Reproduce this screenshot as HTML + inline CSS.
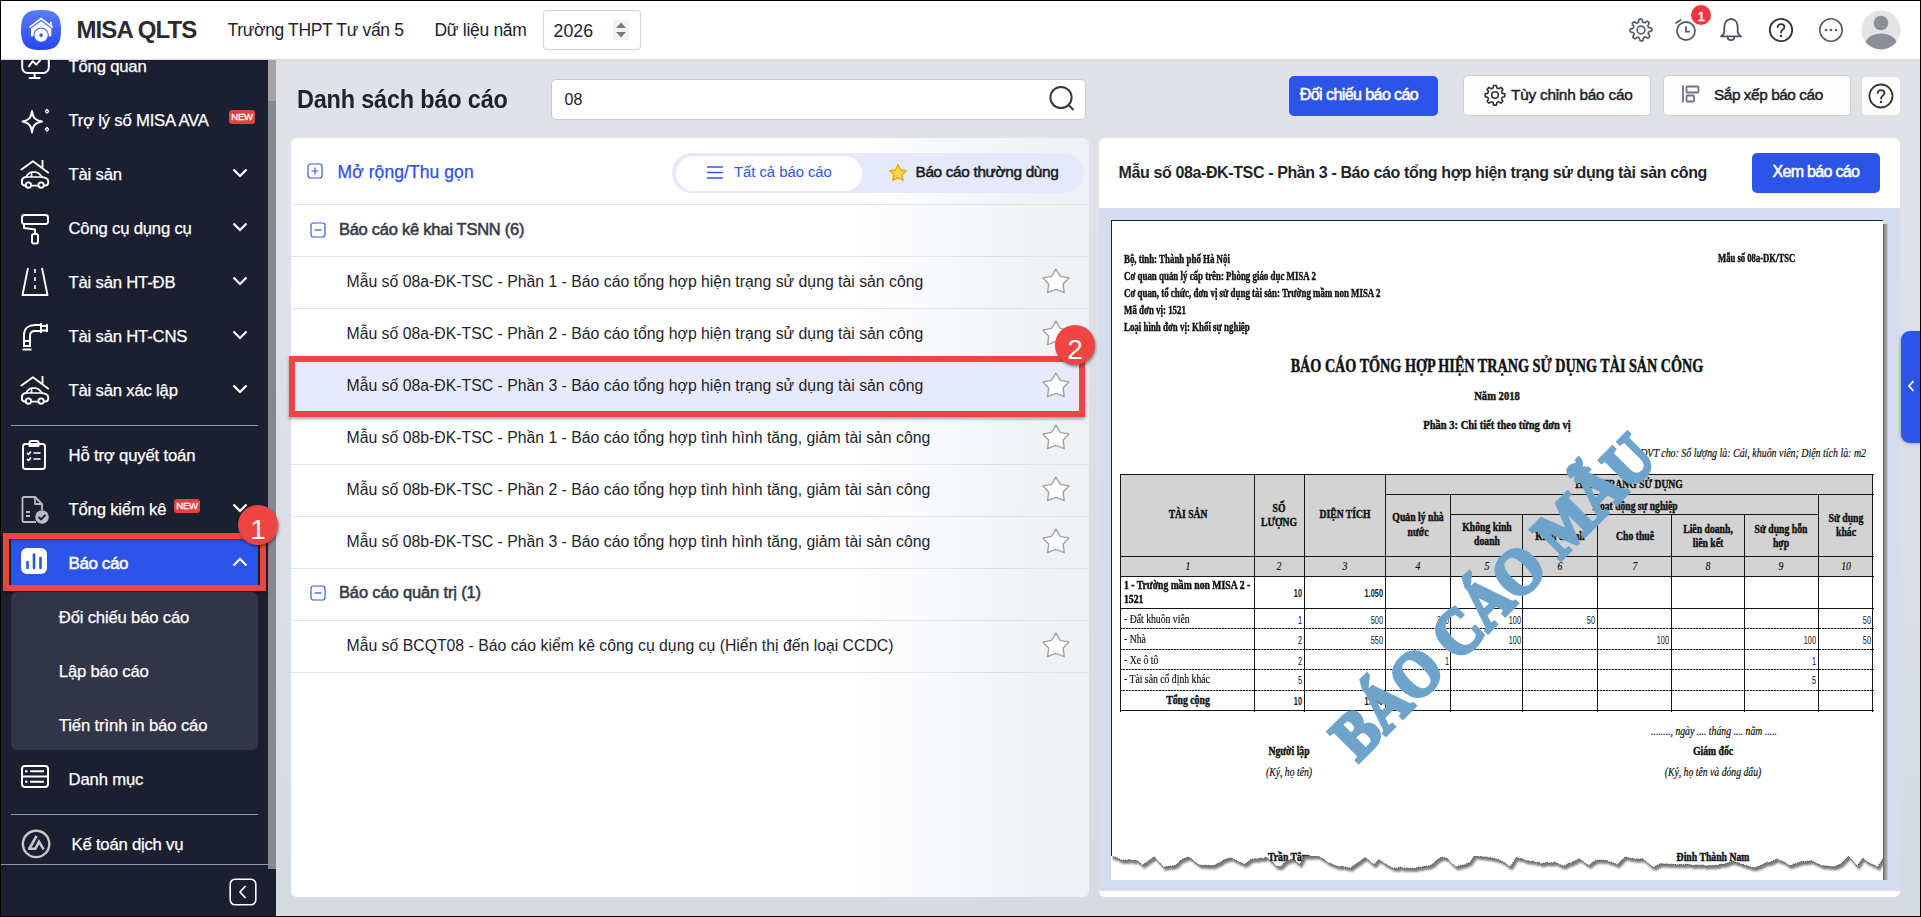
<!DOCTYPE html><html><head><meta charset="utf-8"><style>
html,body{margin:0;padding:0;}
body{width:1921px;height:917px;position:relative;overflow:hidden;background:#dde0e8;font-family:"Liberation Sans",sans-serif;}
.t{position:absolute;white-space:nowrap;}
.b{position:absolute;box-sizing:border-box;}
</style></head><body>
<div class="b" style="left:276px;top:60px;width:1645px;height:857px;background:linear-gradient(180deg,#e0e2e8 0%,#dcdfe6 40%,#d5dae2 100%);"></div>
<div class="b" style="left:0px;top:0px;width:1921px;height:60px;background:#fff;border-bottom:1px solid #d7dbe3;"></div>
<svg class="b" style="left:20px;top:9px" width="42" height="42" viewBox="0 0 42 42">
<defs><linearGradient id="lg" x1="0" y1="0" x2="0" y2="1"><stop offset="0" stop-color="#5b7dff"/><stop offset="1" stop-color="#2846f0"/></linearGradient></defs>
<path d="M21 1 C36 1 41 6 41 21 C41 36 36 41 21 41 C6 41 1 36 1 21 C1 6 6 1 21 1Z" fill="url(#lg)"/>
<path d="M11 19.6 L21.1 12.3 L31.3 19.6 L31.3 27.3 L11 27.3 Z" fill="#fff"/>
<path d="M9.4 18.4 L21.1 9.6 L32.8 18.4" fill="none" stroke="#fff" stroke-width="1.8"/>
<rect x="29.9" y="12.8" width="1.8" height="4" fill="#fff"/>
<circle cx="21.1" cy="26.1" r="7.7" fill="#3d5cf6"/>
<circle cx="21.1" cy="26.1" r="6.6" fill="#fff"/>
<path d="M21.1 23.9 L23.4 26.2 L21.1 28.5 L18.8 26.2Z" fill="#3a5af5"/>
</svg>
<div class="t" style="left:76.50px;top:18.48px;font-family:'Liberation Sans', sans-serif;font-size:24px;line-height:24px;color:#2b2b2b;font-weight:700;letter-spacing:-0.9px;font-style:normal;">MISA QLTS</div>
<div class="t" style="left:227.50px;top:21.79px;font-family:'Liberation Sans', sans-serif;font-size:17.5px;line-height:17.5px;color:#1f2430;font-weight:400;letter-spacing:-0.35px;font-style:normal;">Trường THPT Tư vấn 5</div>
<div class="t" style="left:434.50px;top:21.79px;font-family:'Liberation Sans', sans-serif;font-size:17.5px;line-height:17.5px;color:#1f2430;font-weight:400;letter-spacing:-0.3px;font-style:normal;">Dữ liệu năm</div>
<div class="b" style="left:543px;top:10px;width:98px;height:40px;border:1px solid #d0d3da;border-radius:4px;background:#fff;"></div>
<div class="t" style="left:553.50px;top:22.73px;font-family:'Liberation Sans', sans-serif;font-size:17.8px;line-height:17.8px;color:#1f2430;font-weight:400;letter-spacing:0px;font-style:normal;">2026</div>
<svg class="b" style="left:613px;top:20px;" width="16" height="20" viewBox="0 0 16 20"><rect x="0" y="0" width="16" height="20" fill="#f2f2f2"/><path d="M3 8 L8 2.5 L13 8Z" fill="#7a7a7a"/><path d="M3 12 L8 17.5 L13 12Z" fill="#7a7a7a"/></svg>
<svg class="b" style="left:1628px;top:17px;" width="26" height="26" viewBox="0 0 26 26"><g fill="none" stroke="#565d68" stroke-width="1.7" stroke-linejoin="round"><path d="M23.89 13.00 L23.78 13.56 L23.31 14.08 L22.02 14.43 L21.02 14.70 L20.68 15.06 L20.52 15.44 L20.38 15.83 L20.26 16.23 L20.26 16.70 L20.77 17.49 L21.60 18.58 L21.71 19.33 L21.46 19.85 L21.10 20.29 L20.70 20.70 L20.22 21.02 L19.52 21.05 L18.37 20.39 L17.47 19.88 L16.98 19.89 L16.59 20.04 L16.21 20.22 L15.85 20.41 L15.52 20.74 L15.32 21.66 L15.13 23.03 L14.68 23.64 L14.14 23.82 L13.57 23.89 L13.00 23.89 L12.44 23.78 L11.92 23.31 L11.57 22.02 L11.30 21.02 L10.94 20.68 L10.56 20.52 L10.17 20.38 L9.77 20.26 L9.30 20.26 L8.51 20.77 L7.42 21.60 L6.67 21.71 L6.15 21.46 L5.71 21.10 L5.30 20.70 L4.98 20.22 L4.95 19.52 L5.61 18.37 L6.12 17.47 L6.11 16.98 L5.96 16.59 L5.78 16.21 L5.59 15.85 L5.26 15.52 L4.34 15.32 L2.97 15.13 L2.36 14.68 L2.18 14.14 L2.11 13.57 L2.11 13.00 L2.22 12.44 L2.69 11.92 L3.98 11.57 L4.98 11.30 L5.32 10.94 L5.48 10.56 L5.62 10.17 L5.74 9.77 L5.74 9.30 L5.23 8.51 L4.40 7.42 L4.29 6.67 L4.54 6.15 L4.90 5.71 L5.30 5.30 L5.78 4.98 L6.48 4.95 L7.63 5.61 L8.53 6.12 L9.02 6.11 L9.41 5.96 L9.79 5.78 L10.15 5.59 L10.48 5.26 L10.68 4.34 L10.87 2.97 L11.32 2.36 L11.86 2.18 L12.43 2.11 L13.00 2.11 L13.56 2.22 L14.08 2.69 L14.43 3.98 L14.70 4.98 L15.06 5.32 L15.44 5.48 L15.83 5.62 L16.23 5.74 L16.70 5.74 L17.49 5.23 L18.58 4.40 L19.33 4.29 L19.85 4.54 L20.29 4.90 L20.70 5.30 L21.02 5.78 L21.05 6.48 L20.39 7.63 L19.88 8.53 L19.89 9.02 L20.04 9.41 L20.22 9.79 L20.41 10.15 L20.74 10.48 L21.66 10.68 L23.03 10.87 L23.64 11.32 L23.82 11.86 L23.89 12.43Z"/><circle cx="13" cy="13" r="3.9"/></g></svg>
<svg class="b" style="left:1672px;top:15px;" width="28" height="30" viewBox="0 0 28 30"><g fill="none" stroke="#565d68" stroke-width="1.8" stroke-linecap="round"><circle cx="14" cy="16" r="9"/><path d="M14 12 L14 16.6 L17.2 16.6"/><path d="M4 8 L8.6 5"/></g></svg>
<div class="b" style="left:1691px;top:4.8px;width:20px;height:20px;border-radius:50%;background:#f5343f;"></div>
<div class="t" style="left:1701.30px;top:9.60px;font-family:'Liberation Sans', sans-serif;font-size:13px;line-height:13px;color:#fff;font-weight:400;letter-spacing:0px;font-style:normal;transform:translateX(-50%);-webkit-text-stroke:0.5px #fff;">1</div>
<svg class="b" style="left:1719px;top:16px;" width="24" height="28" viewBox="0 0 24 28"><g fill="none" stroke="#4a5260" stroke-width="1.8" stroke-linejoin="round"><path d="M12 3.2 C7.2 3.2 5.3 7.5 5.3 11.5 L5.3 15.5 C5.3 17.5 4 19 2 20.3 L22 20.3 C20 19 18.7 17.5 18.7 15.5 L18.7 11.5 C18.7 7.5 16.8 3.2 12 3.2Z"/><path d="M8.6 20.5 C8.6 25.3 15.4 25.3 15.4 20.5"/><path d="M12 2.2 L12 3.2"/></g></svg>
<svg class="b" style="left:1768px;top:17px;" width="26" height="26" viewBox="0 0 26 26"><g fill="none" stroke="#333" stroke-width="1.8"><circle cx="13" cy="13" r="11.2"/><path d="M9.6 10 C9.6 6.2 16.4 6.2 16.4 10 C16.4 12.6 13 12.6 13 15.5" stroke-linecap="round"/></g><circle cx="13" cy="19" r="1.2" fill="#333"/></svg>
<svg class="b" style="left:1818px;top:17px;" width="26" height="26" viewBox="0 0 26 26"><g fill="none" stroke="#555c6a" stroke-width="1.6"><circle cx="13" cy="13" r="11.2"/></g><g fill="#555c6a"><circle cx="8" cy="13" r="1.3"/><circle cx="13" cy="13" r="1.3"/><circle cx="18" cy="13" r="1.3"/></g></svg>
<svg class="b" style="left:1861px;top:10px" width="40" height="40" viewBox="0 0 40 40"><defs><clipPath id="av"><circle cx="20" cy="20" r="19.5"/></clipPath></defs>
<circle cx="20" cy="20" r="19.5" fill="#e4e4e6"/><g clip-path="url(#av)" fill="#8c8f98"><circle cx="20" cy="13" r="7.3"/><path d="M3 38 C4 27 12 23.5 20 23.5 C28 23.5 36 27 37 38 L37 40 L3 40Z"/></g></svg>
<div class="b" style="left:0px;top:60px;width:268px;height:857px;background:#1c1f2f;"></div>
<div class="b" style="left:268px;top:60px;width:8px;height:41px;background:#a4a4a6;"></div>
<div class="b" style="left:268px;top:101px;width:8px;height:768px;background:#86898c;"></div>
<div class="b" style="left:268px;top:869px;width:8px;height:48px;background:#1c1f2f;"></div>
<div class="b" style="left:0;top:60px;width:268px;height:857px;overflow:hidden;">
<div class="b" style="left:0;top:-60px;width:268px;height:917px;">
<svg class="b" style="left:20px;top:37px;" width="30" height="44" viewBox="0 0 30 44"><g fill="none" stroke="#fff" stroke-width="2" stroke-linejoin="round"><rect x="2.2" y="8" width="26.6" height="28" rx="5.5"/><path d="M8.5 29.8 L12.8 24.2 L16.2 27.6 L20.5 22.8"/><path d="M14.6 36 L14.6 41 M8.8 41 L20.4 41"/></g></svg>
<div class="t" style="left:68.50px;top:58.76px;font-family:'Liberation Sans', sans-serif;font-size:16.7px;line-height:16.7px;color:#ffffff;font-weight:400;letter-spacing:-0.2px;font-style:normal;-webkit-text-stroke:0.25px #fff;">Tổng quan</div>
</div></div>
<svg class="b" style="left:21px;top:108px;" width="30" height="28" viewBox="0 0 30 28"><g fill="none" stroke="#fff" stroke-width="1.9" stroke-linejoin="round"><path d="M11 3 C12 10 14 12 21 13.5 C14 15 12 17 11 24.5 C10 17 8 15 1.5 13.5 C8 12 10 10 11 3Z"/><path d="M26 1.5 l1.6 1.8 -1.6 1.8 -1.6-1.8z" stroke-width="1.3"/><path d="M26 19.5 l1.6 1.8 -1.6 1.8 -1.6-1.8z" stroke-width="1.3"/></g></svg>
<div class="t" style="left:68.50px;top:112.76px;font-family:'Liberation Sans', sans-serif;font-size:16.7px;line-height:16.7px;color:#ffffff;font-weight:400;letter-spacing:-0.22px;font-style:normal;-webkit-text-stroke:0.25px #fff;">Trợ lý số MISA AVA</div>
<div class="b" style="left:229px;top:110px;width:26px;height:14px;border-radius:3px;background:#e8403f;"></div>
<div class="t" style="left:242.00px;top:112.27px;font-family:'Liberation Sans', sans-serif;font-size:9.6px;line-height:9.6px;color:#fff;font-weight:400;letter-spacing:-0.3px;font-style:normal;transform:translateX(-50%);-webkit-text-stroke:0.3px #fff;">NEW</div>
<svg class="b" style="left:20px;top:160px;" width="30" height="30" viewBox="0 0 30 30"><g fill="none" stroke="#fff" stroke-width="1.9" stroke-linejoin="round" stroke-linecap="round"><path d="M1.5 9.5 L12.9 1.3 L28 12.6 M22.5 0.8 L22.5 7.6"/><path d="M5 25.6 C2.5 25.6 1.9 24.5 1.9 22.5 L1.9 21.2 C1.9 18.8 3.6 17.3 6.2 17 L7.8 14.5 C8.8 12.9 10.2 12.1 12.2 12.1 L15.3 12.1 C17.3 12.1 18.8 12.9 20 14.5 L21.8 17 L24.6 17.6 C27 18.1 28.3 19.8 28.3 22.3 C28.3 24.6 27.4 25.6 25 25.6 Z"/><path d="M7.2 17 L21.8 17 M11.6 12.6 L11.6 17" stroke-width="1.6"/><circle cx="8.4" cy="25.1" r="2.7" fill="#1c1f2f"/><circle cx="21.1" cy="25.1" r="2.7" fill="#1c1f2f"/></g></svg>
<div class="t" style="left:68.50px;top:166.66px;font-family:'Liberation Sans', sans-serif;font-size:16.7px;line-height:16.7px;color:#ffffff;font-weight:400;letter-spacing:-0.2px;font-style:normal;-webkit-text-stroke:0.25px #fff;">Tài sản</div>
<svg class="b" style="left:232px;top:168px;" width="16" height="10" viewBox="0 0 16 10"><path d="M1.5 1.5 L8 8 L14.5 1.5" fill="none" stroke="#fff" stroke-width="2.2"/></svg>
<svg class="b" style="left:20px;top:213px;" width="30" height="32" viewBox="0 0 30 32"><g fill="none" stroke="#fff" stroke-width="1.9" stroke-linejoin="round"><rect x="2" y="2" width="26" height="9" rx="2.5"/><path d="M4 11 L4 15 L15 16.5 L15 21"/><rect x="12" y="21" width="6" height="9.5" rx="1.8"/></g></svg>
<div class="t" style="left:68.50px;top:220.66px;font-family:'Liberation Sans', sans-serif;font-size:16.7px;line-height:16.7px;color:#ffffff;font-weight:400;letter-spacing:-0.2px;font-style:normal;-webkit-text-stroke:0.25px #fff;">Công cụ dụng cụ</div>
<svg class="b" style="left:232px;top:222px;" width="16" height="10" viewBox="0 0 16 10"><path d="M1.5 1.5 L8 8 L14.5 1.5" fill="none" stroke="#fff" stroke-width="2.2"/></svg>
<svg class="b" style="left:20px;top:266px;" width="30" height="32" viewBox="0 0 30 32"><g fill="none" stroke="#fff" stroke-width="1.9" stroke-linejoin="round"><path d="M8 2 L2.5 29 L27.5 29 L22 2"/></g><g stroke="#fff" stroke-width="1.6"><path d="M15 3 L15 7 M15 11 L15 15 M15 19 L15 23"/></g></svg>
<div class="t" style="left:68.50px;top:274.66px;font-family:'Liberation Sans', sans-serif;font-size:16.7px;line-height:16.7px;color:#ffffff;font-weight:400;letter-spacing:-0.2px;font-style:normal;-webkit-text-stroke:0.25px #fff;">Tài sản HT-ĐB</div>
<svg class="b" style="left:232px;top:276px;" width="16" height="10" viewBox="0 0 16 10"><path d="M1.5 1.5 L8 8 L14.5 1.5" fill="none" stroke="#fff" stroke-width="2.2"/></svg>
<svg class="b" style="left:20px;top:321px;" width="30" height="30" viewBox="0 0 30 30"><g fill="none" stroke="#fff" stroke-width="1.9" stroke-linejoin="round"><path d="M4 26 L4 14 C4 7 9 4 15 4 L21 4 M10 26 L10 15 C10 11.5 12 10 15 10 L21 10"/><path d="M21 2 L21 12 M21 5 L28 5 M21 9.5 L28 9.5 M27 3 L27 11"/><path d="M3 20 L11 20 M3 25 L11 25 M2.5 28.5 L11.5 28.5"/></g></svg>
<div class="t" style="left:68.50px;top:328.66px;font-family:'Liberation Sans', sans-serif;font-size:16.7px;line-height:16.7px;color:#ffffff;font-weight:400;letter-spacing:-0.2px;font-style:normal;-webkit-text-stroke:0.25px #fff;">Tài sản HT-CNS</div>
<svg class="b" style="left:232px;top:330px;" width="16" height="10" viewBox="0 0 16 10"><path d="M1.5 1.5 L8 8 L14.5 1.5" fill="none" stroke="#fff" stroke-width="2.2"/></svg>
<svg class="b" style="left:20px;top:376px;" width="30" height="30" viewBox="0 0 30 30"><g fill="none" stroke="#fff" stroke-width="1.9" stroke-linejoin="round" stroke-linecap="round"><path d="M1.5 9.5 L12.9 1.3 L28 12.6 M22.5 0.8 L22.5 7.6"/><path d="M5 25.6 C2.5 25.6 1.9 24.5 1.9 22.5 L1.9 21.2 C1.9 18.8 3.6 17.3 6.2 17 L7.8 14.5 C8.8 12.9 10.2 12.1 12.2 12.1 L15.3 12.1 C17.3 12.1 18.8 12.9 20 14.5 L21.8 17 L24.6 17.6 C27 18.1 28.3 19.8 28.3 22.3 C28.3 24.6 27.4 25.6 25 25.6 Z"/><path d="M7.2 17 L21.8 17 M11.6 12.6 L11.6 17" stroke-width="1.6"/><circle cx="8.4" cy="25.1" r="2.7" fill="#1c1f2f"/><circle cx="21.1" cy="25.1" r="2.7" fill="#1c1f2f"/></g></svg>
<div class="t" style="left:68.50px;top:382.66px;font-family:'Liberation Sans', sans-serif;font-size:16.7px;line-height:16.7px;color:#ffffff;font-weight:400;letter-spacing:-0.2px;font-style:normal;-webkit-text-stroke:0.25px #fff;">Tài sản xác lập</div>
<svg class="b" style="left:232px;top:384px;" width="16" height="10" viewBox="0 0 16 10"><path d="M1.5 1.5 L8 8 L14.5 1.5" fill="none" stroke="#fff" stroke-width="2.2"/></svg>
<div class="b" style="left:11px;top:425px;width:247px;height:1px;background:#8e95a8;"></div>
<svg class="b" style="left:20px;top:439px;" width="28" height="32" viewBox="0 0 28 32"><g fill="none" stroke="#fff" stroke-width="1.9" stroke-linejoin="round"><rect x="3" y="5" width="22" height="25" rx="2.5"/><path d="M9.5 7 L9.5 3.5 C9.5 2.5 10.5 2 11.5 2 L16.5 2 C17.5 2 18.5 2.5 18.5 3.5 L18.5 7 Z"/><path d="M7 14 L8.5 15.5 L11 12.5 M7 20 L8.5 21.5 L11 18.5 M13.5 14 L20.5 14 M13.5 20 L20.5 20" stroke-width="1.7"/></g></svg>
<div class="t" style="left:68.50px;top:447.56px;font-family:'Liberation Sans', sans-serif;font-size:16.7px;line-height:16.7px;color:#ffffff;font-weight:400;letter-spacing:-0.17px;font-style:normal;-webkit-text-stroke:0.25px #fff;">Hỗ trợ quyết toán</div>
<svg class="b" style="left:20px;top:495px;" width="30" height="30" viewBox="0 0 30 30"><g fill="none" stroke="#b9bcc4" stroke-width="1.8" stroke-linejoin="round"><path d="M16 27 L4 27 C3 27 2.5 26.5 2.5 25.5 L2.5 3.5 C2.5 2.5 3 2 4 2 L15 2 L22 9 L22 15"/><path d="M15 2 L15 9 L22 9"/><path d="M6 17 L10 17 M6 21 L10 21"/></g><circle cx="22" cy="22" r="6.8" fill="#b9bcc4"/><path d="M18.6 22 L21 24.4 L25.5 19.8" fill="none" stroke="#1c1f2f" stroke-width="1.8"/></svg>
<div class="t" style="left:68.50px;top:501.66px;font-family:'Liberation Sans', sans-serif;font-size:16.7px;line-height:16.7px;color:#ffffff;font-weight:400;letter-spacing:-0.2px;font-style:normal;-webkit-text-stroke:0.25px #fff;">Tổng kiểm kê</div>
<div class="b" style="left:174px;top:499px;width:26px;height:14px;border-radius:3px;background:#e8403f;"></div>
<div class="t" style="left:187.00px;top:501.27px;font-family:'Liberation Sans', sans-serif;font-size:9.6px;line-height:9.6px;color:#fff;font-weight:400;letter-spacing:-0.3px;font-style:normal;transform:translateX(-50%);-webkit-text-stroke:0.3px #fff;">NEW</div>
<svg class="b" style="left:232px;top:503px;" width="16" height="10" viewBox="0 0 16 10"><path d="M1.5 1.5 L8 8 L14.5 1.5" fill="none" stroke="#fff" stroke-width="2.2"/></svg>
<div class="b" style="left:11px;top:539px;width:247px;height:46px;background:#2c54e8;box-shadow:inset 0 3px 3px -2px rgba(0,0,30,0.45);"></div>
<svg class="b" style="left:21px;top:548px;" width="26" height="27" viewBox="0 0 26 27"><rect x="0" y="0" width="26" height="26" rx="6" fill="#fff"/><g stroke="#2c54e8" stroke-width="2.6" stroke-linecap="round"><path d="M6.5 14 L6.5 20 M13 6.5 L13 20 M19.5 10 L19.5 20"/></g></svg>
<div class="t" style="left:68.50px;top:554.61px;font-family:'Liberation Sans', sans-serif;font-size:17px;line-height:17px;color:#ffffff;font-weight:400;letter-spacing:-0.4px;font-style:normal;-webkit-text-stroke:0.5px #fff;">Báo cáo</div>
<svg class="b" style="left:232px;top:557px;" width="16" height="10" viewBox="0 0 16 10"><path d="M1.5 8.5 L8 2 L14.5 8.5" fill="none" stroke="#fff" stroke-width="2.2"/></svg>
<div class="b" style="left:3px;top:533px;width:263px;height:58px;border:6px solid #f04444;box-shadow:0 2px 3px rgba(0,0,0,0.35);"></div>
<div class="b" style="left:11px;top:592px;width:247px;height:158px;background:#323447;border-radius:6px;"></div>
<div class="t" style="left:58.80px;top:609.86px;font-family:'Liberation Sans', sans-serif;font-size:16.7px;line-height:16.7px;color:#ffffff;font-weight:400;letter-spacing:-0.19px;font-style:normal;-webkit-text-stroke:0.25px #fff;">Đối chiếu báo cáo</div>
<div class="t" style="left:58.80px;top:663.66px;font-family:'Liberation Sans', sans-serif;font-size:16.7px;line-height:16.7px;color:#ffffff;font-weight:400;letter-spacing:-0.19px;font-style:normal;-webkit-text-stroke:0.25px #fff;">Lập báo cáo</div>
<div class="t" style="left:58.80px;top:717.66px;font-family:'Liberation Sans', sans-serif;font-size:16.7px;line-height:16.7px;color:#ffffff;font-weight:400;letter-spacing:-0.14px;font-style:normal;-webkit-text-stroke:0.25px #fff;">Tiến trình in báo cáo</div>
<svg class="b" style="left:20px;top:764px;" width="30" height="25" viewBox="0 0 30 25"><g fill="none" stroke="#fff" stroke-width="2"><rect x="2" y="2" width="26" height="21" rx="3"/><path d="M2 12.5 L28 12.5 M10 7.3 L24 7.3 M10 17.7 L24 17.7"/></g><g fill="#fff"><circle cx="6.3" cy="7.3" r="1.3"/><circle cx="6.3" cy="17.7" r="1.3"/></g></svg>
<div class="t" style="left:68.50px;top:771.86px;font-family:'Liberation Sans', sans-serif;font-size:16.7px;line-height:16.7px;color:#ffffff;font-weight:400;letter-spacing:-0.16px;font-style:normal;-webkit-text-stroke:0.25px #fff;">Danh mục</div>
<div class="b" style="left:11px;top:814px;width:247px;height:1px;background:#8e95a8;"></div>
<svg class="b" style="left:20px;top:828px;" width="32" height="32" viewBox="0 0 32 32"><g fill="none" stroke="#c8c8cc" stroke-width="2.4"><circle cx="16.1" cy="15.9" r="13.2"/></g><g fill="none" stroke="#c8c8cc" stroke-width="2.6" stroke-linejoin="miter" stroke-linecap="butt"><path d="M9.2 21 L16.6 7.8"/><path d="M8.2 20.7 L15.4 20.7 L19 13.6 L23.6 21.4"/></g></svg>
<div class="t" style="left:71.60px;top:836.76px;font-family:'Liberation Sans', sans-serif;font-size:16.7px;line-height:16.7px;color:#ffffff;font-weight:400;letter-spacing:-0.23px;font-style:normal;-webkit-text-stroke:0.25px #fff;">Kế toán dịch vụ</div>
<div class="b" style="left:0px;top:864px;width:276px;height:1px;background:#8e95a8;"></div>
<svg class="b" style="left:229px;top:878px;" width="28" height="28" viewBox="0 0 28 28"><rect x="1.2" y="1.2" width="25.6" height="25.6" rx="5" fill="none" stroke="#fff" stroke-width="1.6"/><path d="M16.5 8 L11 14 L16.5 20" fill="none" stroke="#fff" stroke-width="1.6"/></svg>
<div class="b" style="left:238px;top:505px;width:40px;height:40px;border-radius:50%;background:#f04444;box-shadow:1px 2px 3px rgba(0,0,0,0.4);"></div>
<div class="t" style="left:258.00px;top:515.60px;font-family:'Liberation Sans', sans-serif;font-size:28px;line-height:28px;color:#fff;font-weight:400;letter-spacing:0px;font-style:normal;transform:translateX(-50%);">1</div>
<div class="t" style="left:296.50px;top:87.01px;font-family:'Liberation Sans', sans-serif;font-size:25.5px;line-height:25.5px;color:#1e2230;font-weight:700;letter-spacing:-0.2px;font-style:normal;transform:scaleX(0.92);transform-origin:0 0;">Danh sách báo cáo</div>
<div class="b" style="left:551px;top:79px;width:535px;height:41px;background:#fff;border:1px solid #c9ccd3;border-radius:5px;"></div>
<div class="t" style="left:564.50px;top:92.06px;font-family:'Liberation Sans', sans-serif;font-size:16px;line-height:16px;color:#222;font-weight:400;letter-spacing:0px;font-style:normal;">08</div>
<svg class="b" style="left:1048px;top:85px;" width="28" height="28" viewBox="0 0 28 28"><g fill="none" stroke="#3a3a3a" stroke-width="2"><circle cx="13" cy="12.5" r="10.6"/><path d="M20.5 20 L25.5 25"/></g></svg>
<div class="b" style="left:1289px;top:76px;width:149px;height:40px;background:#2c54e8;border-radius:5px;"></div>
<div class="t" style="left:1299.80px;top:86.56px;font-family:'Liberation Sans', sans-serif;font-size:16px;line-height:16px;color:#fff;font-weight:400;letter-spacing:-0.57px;font-style:normal;-webkit-text-stroke:0.55px #fff;">Đối chiếu báo cáo</div>
<div class="b" style="left:1463px;top:75px;width:188px;height:41px;background:#fdfdfe;border:1px solid #cdd0d6;border-radius:5px;"></div>
<svg class="b" style="left:1484px;top:84px;" width="22" height="22" viewBox="0 0 22 22"><g fill="none" stroke="#333" stroke-width="1.6" stroke-linejoin="round"><path d="M9.6 1.5 h2.8 l.5 2.5 1.9.8 2.1-1.4 2 2 -1.4 2.1 .8 1.9 2.5.5 v2.8 l-2.5.5 -.8 1.9 1.4 2.1 -2 2 -2.1-1.4 -1.9.8 -.5 2.5 h-2.8 l-.5-2.5 -1.9-.8 -2.1 1.4 -2-2 1.4-2.1 -.8-1.9 -2.5-.5 v-2.8 l2.5-.5 .8-1.9 -1.4-2.1 2-2 2.1 1.4 1.9-.8z"/><circle cx="11" cy="11" r="3.3"/></g></svg>
<div class="t" style="left:1511.00px;top:86.76px;font-family:'Liberation Sans', sans-serif;font-size:15.4px;line-height:15.4px;color:#222;font-weight:400;letter-spacing:-0.25px;font-style:normal;-webkit-text-stroke:0.45px #222;">Tùy chỉnh báo cáo</div>
<div class="b" style="left:1663px;top:75px;width:188px;height:41px;background:#fdfdfe;border:1px solid #cdd0d6;border-radius:5px;"></div>
<svg class="b" style="left:1681px;top:84px;" width="20" height="20" viewBox="0 0 20 20"><g fill="none" stroke="#6b7280" stroke-width="1.8"><path d="M2 1.5 L2 18.5"/><rect x="5.5" y="2.5" width="12" height="6" rx="1"/><rect x="5.5" y="11.5" width="7.5" height="6" rx="1"/></g></svg>
<div class="t" style="left:1714.00px;top:86.56px;font-family:'Liberation Sans', sans-serif;font-size:15.4px;line-height:15.4px;color:#222;font-weight:400;letter-spacing:-0.45px;font-style:normal;-webkit-text-stroke:0.45px #222;">Sắp xếp báo cáo</div>
<div class="b" style="left:1861px;top:76px;width:40px;height:40px;background:#fdfdfe;border:1px solid #dcdfe5;border-radius:5px;"></div>
<svg class="b" style="left:1868px;top:83px;" width="26" height="26" viewBox="0 0 26 26"><g fill="none" stroke="#333" stroke-width="1.8"><circle cx="13" cy="13" r="11.5"/><path d="M9.6 10 C9.6 6.2 16.4 6.2 16.4 10 C16.4 12.6 13 12.6 13 15.5" stroke-linecap="round"/></g><circle cx="13" cy="19" r="1.2" fill="#333"/></svg>
<div class="b" style="left:291px;top:138px;width:798px;height:759px;background:linear-gradient(90deg,#fff 0%,#fff 70%,#f3f5f8 88%,#edf0f4 100%);border-radius:6px;"></div>
<svg class="b" style="left:307px;top:163px;" width="17" height="17" viewBox="0 0 17 17"><rect x="1" y="1" width="14" height="14" rx="2.5" fill="none" stroke="#3f5ae0" stroke-width="1.2"/><path d="M8 4.5 L8 11.5 M4.5 8 L11.5 8" stroke="#3f5ae0" stroke-width="1.2"/></svg>
<div class="t" style="left:337.50px;top:163.79px;font-family:'Liberation Sans', sans-serif;font-size:17.5px;line-height:17.5px;color:#2d50ef;font-weight:400;letter-spacing:0.08px;font-style:normal;-webkit-text-stroke:0.25px #2d50ef;">Mở rộng/Thu gọn</div>
<div class="b" style="left:672px;top:153px;width:412px;height:40px;background:#e5e9fb;border-radius:20px;"></div>
<div class="b" style="left:676px;top:156px;width:186px;height:35px;background:#fff;border-radius:18px;"></div>
<svg class="b" style="left:706px;top:165px;" width="18" height="15" viewBox="0 0 18 15"><g stroke="#3556e6" stroke-width="1.6"><path d="M1 2 L17 2 M1 7.5 L17 7.5 M1 13 L17 13"/></g></svg>
<div class="t" style="left:734.00px;top:165.39px;font-family:'Liberation Sans', sans-serif;font-size:14.9px;line-height:14.9px;color:#2f55ee;font-weight:400;letter-spacing:-0.05px;font-style:normal;">Tất cả báo cáo</div>
<svg class="b" style="left:888px;top:163px;" width="20" height="19" viewBox="0 0 20 19"><path d="M10 1.5 L12.6 6.9 L18.5 7.6 L14.1 11.6 L15.3 17.5 L10 14.6 L4.7 17.5 L5.9 11.6 L1.5 7.6 L7.4 6.9Z" fill="#fcd34d" stroke="#e6a700" stroke-width="1.2" stroke-linejoin="round"/></svg>
<div class="t" style="left:915.50px;top:164.36px;font-family:'Liberation Sans', sans-serif;font-size:15.4px;line-height:15.4px;color:#1a1a1a;font-weight:400;letter-spacing:-0.35px;font-style:normal;-webkit-text-stroke:0.5px #1a1a1a;">Báo cáo thường dùng</div>
<div class="b" style="left:291px;top:204px;width:798px;height:1px;background:#e3e4e8;"></div>
<svg class="b" style="left:310px;top:222px;" width="16" height="16" viewBox="0 0 16 16"><rect x="1" y="1" width="14" height="14" rx="2.5" fill="none" stroke="#3f5ae0" stroke-width="1.2"/><path d="M4.5 8 L11.5 8" stroke="#3f5ae0" stroke-width="1.3"/></svg>
<div class="t" style="left:338.90px;top:220.73px;font-family:'Liberation Sans', sans-serif;font-size:16.5px;line-height:16.5px;color:#363a44;font-weight:400;letter-spacing:-0.25px;font-style:normal;-webkit-text-stroke:0.55px #363a44;">Báo cáo kê khai TSNN (6)</div>
<div class="b" style="left:291px;top:256px;width:798px;height:1px;background:#e3e4e8;"></div>
<div class="b" style="left:291px;top:308px;width:798px;height:1px;background:#e3e4e8;"></div>
<div class="b" style="left:291px;top:360px;width:798px;height:1px;background:#e3e4e8;"></div>
<div class="b" style="left:291px;top:412px;width:798px;height:1px;background:#e3e4e8;"></div>
<div class="b" style="left:291px;top:464px;width:798px;height:1px;background:#e3e4e8;"></div>
<div class="b" style="left:291px;top:516px;width:798px;height:1px;background:#e3e4e8;"></div>
<div class="t" style="left:346.50px;top:274.43px;font-family:'Liberation Sans', sans-serif;font-size:15.8px;line-height:15.8px;color:#1f2329;font-weight:400;letter-spacing:0px;font-style:normal;">Mẫu số 08a-ĐK-TSC - Phần 1 - Báo cáo tổng hợp hiện trạng sử dụng tài sản công</div>
<svg class="b" style="left:1041px;top:268px;" width="30" height="28" viewBox="0 0 30 28"><path d="M14.9 1.2 L19.2 8.4 L27.9 9.9 L22.1 15.9 L23.2 24.6 L14.9 21.3 L6.6 24.6 L7.7 15.9 L1.9 9.9 L10.6 8.4Z" fill="#fff" stroke="#a2a2a2" stroke-width="1.4" stroke-linejoin="round"/></svg>
<div class="t" style="left:346.50px;top:326.43px;font-family:'Liberation Sans', sans-serif;font-size:15.8px;line-height:15.8px;color:#1f2329;font-weight:400;letter-spacing:0px;font-style:normal;">Mẫu số 08a-ĐK-TSC - Phần 2 - Báo cáo tổng hợp hiện trạng sử dụng tài sản công</div>
<svg class="b" style="left:1041px;top:320px;" width="30" height="28" viewBox="0 0 30 28"><path d="M14.9 1.2 L19.2 8.4 L27.9 9.9 L22.1 15.9 L23.2 24.6 L14.9 21.3 L6.6 24.6 L7.7 15.9 L1.9 9.9 L10.6 8.4Z" fill="#fff" stroke="#a2a2a2" stroke-width="1.4" stroke-linejoin="round"/></svg>
<div class="b" style="left:291px;top:361px;width:798px;height:51px;background:#e7eafb;"></div>
<div class="t" style="left:346.50px;top:378.43px;font-family:'Liberation Sans', sans-serif;font-size:15.8px;line-height:15.8px;color:#1f2329;font-weight:400;letter-spacing:0px;font-style:normal;">Mẫu số 08a-ĐK-TSC - Phần 3 - Báo cáo tổng hợp hiện trạng sử dụng tài sản công</div>
<svg class="b" style="left:1041px;top:372px;" width="30" height="28" viewBox="0 0 30 28"><path d="M14.9 1.2 L19.2 8.4 L27.9 9.9 L22.1 15.9 L23.2 24.6 L14.9 21.3 L6.6 24.6 L7.7 15.9 L1.9 9.9 L10.6 8.4Z" fill="#fff" stroke="#a2a2a2" stroke-width="1.4" stroke-linejoin="round"/></svg>
<div class="t" style="left:346.50px;top:430.43px;font-family:'Liberation Sans', sans-serif;font-size:15.8px;line-height:15.8px;color:#1f2329;font-weight:400;letter-spacing:0px;font-style:normal;">Mẫu số 08b-ĐK-TSC - Phần 1 - Báo cáo tổng hợp tình hình tăng, giảm tài sản công</div>
<svg class="b" style="left:1041px;top:424px;" width="30" height="28" viewBox="0 0 30 28"><path d="M14.9 1.2 L19.2 8.4 L27.9 9.9 L22.1 15.9 L23.2 24.6 L14.9 21.3 L6.6 24.6 L7.7 15.9 L1.9 9.9 L10.6 8.4Z" fill="#fff" stroke="#a2a2a2" stroke-width="1.4" stroke-linejoin="round"/></svg>
<div class="t" style="left:346.50px;top:482.43px;font-family:'Liberation Sans', sans-serif;font-size:15.8px;line-height:15.8px;color:#1f2329;font-weight:400;letter-spacing:0px;font-style:normal;">Mẫu số 08b-ĐK-TSC - Phần 2 - Báo cáo tổng hợp tình hình tăng, giảm tài sản công</div>
<svg class="b" style="left:1041px;top:476px;" width="30" height="28" viewBox="0 0 30 28"><path d="M14.9 1.2 L19.2 8.4 L27.9 9.9 L22.1 15.9 L23.2 24.6 L14.9 21.3 L6.6 24.6 L7.7 15.9 L1.9 9.9 L10.6 8.4Z" fill="#fff" stroke="#a2a2a2" stroke-width="1.4" stroke-linejoin="round"/></svg>
<div class="t" style="left:346.50px;top:534.43px;font-family:'Liberation Sans', sans-serif;font-size:15.8px;line-height:15.8px;color:#1f2329;font-weight:400;letter-spacing:0px;font-style:normal;">Mẫu số 08b-ĐK-TSC - Phần 3 - Báo cáo tổng hợp tình hình tăng, giảm tài sản công</div>
<svg class="b" style="left:1041px;top:528px;" width="30" height="28" viewBox="0 0 30 28"><path d="M14.9 1.2 L19.2 8.4 L27.9 9.9 L22.1 15.9 L23.2 24.6 L14.9 21.3 L6.6 24.6 L7.7 15.9 L1.9 9.9 L10.6 8.4Z" fill="#fff" stroke="#a2a2a2" stroke-width="1.4" stroke-linejoin="round"/></svg>
<div class="b" style="left:291px;top:568px;width:798px;height:1px;background:#e3e4e8;"></div>
<div class="b" style="left:291px;top:620px;width:798px;height:1px;background:#e3e4e8;"></div>
<div class="b" style="left:291px;top:672px;width:798px;height:1px;background:#e3e4e8;"></div>
<svg class="b" style="left:310px;top:585px;" width="16" height="16" viewBox="0 0 16 16"><rect x="1" y="1" width="14" height="14" rx="2.5" fill="none" stroke="#3f5ae0" stroke-width="1.2"/><path d="M4.5 8 L11.5 8" stroke="#3f5ae0" stroke-width="1.3"/></svg>
<div class="t" style="left:339.00px;top:584.13px;font-family:'Liberation Sans', sans-serif;font-size:16.5px;line-height:16.5px;color:#363a44;font-weight:400;letter-spacing:-0.15px;font-style:normal;-webkit-text-stroke:0.55px #363a44;">Báo cáo quản trị (1)</div>
<div class="t" style="left:346.50px;top:637.93px;font-family:'Liberation Sans', sans-serif;font-size:15.8px;line-height:15.8px;color:#1f2329;font-weight:400;letter-spacing:0px;font-style:normal;">Mẫu số BCQT08 - Báo cáo kiểm kê công cụ dụng cụ (Hiển thị đến loại CCDC)</div>
<svg class="b" style="left:1041px;top:632px;" width="30" height="28" viewBox="0 0 30 28"><path d="M14.9 1.2 L19.2 8.4 L27.9 9.9 L22.1 15.9 L23.2 24.6 L14.9 21.3 L6.6 24.6 L7.7 15.9 L1.9 9.9 L10.6 8.4Z" fill="#fff" stroke="#a2a2a2" stroke-width="1.4" stroke-linejoin="round"/></svg>
<div class="b" style="left:289px;top:356px;width:796px;height:61px;border:6px solid #f04444;box-shadow:0 2px 3px rgba(0,0,0,0.35);"></div>
<div class="b" style="left:1055px;top:325px;width:40px;height:40px;border-radius:50%;background:#f04444;box-shadow:1px 2px 3px rgba(0,0,0,0.4);"></div>
<div class="t" style="left:1075.00px;top:335.60px;font-family:'Liberation Sans', sans-serif;font-size:28px;line-height:28px;color:#fff;font-weight:400;letter-spacing:0px;font-style:normal;transform:translateX(-50%);">2</div>
<div class="b" style="left:1099px;top:138px;width:801px;height:759px;background:#fff;border-radius:6px;"></div>
<div class="t" style="left:1118.50px;top:165.26px;font-family:'Liberation Sans', sans-serif;font-size:16px;line-height:16px;color:#1f2329;font-weight:700;letter-spacing:-0.38px;font-style:normal;">Mẫu số 08a-ĐK-TSC - Phần 3 - Báo cáo tổng hợp hiện trạng sử dụng tài sản công</div>
<div class="b" style="left:1752px;top:153px;width:128px;height:40px;background:#2c54e8;border-radius:5px;"></div>
<div class="t" style="left:1772.50px;top:163.56px;font-family:'Liberation Sans', sans-serif;font-size:16px;line-height:16px;color:#fff;font-weight:400;letter-spacing:-0.68px;font-style:normal;-webkit-text-stroke:0.55px #fff;">Xem báo cáo</div>
<div class="b" style="left:1099px;top:208px;width:801px;height:683px;background:#d4dcf0;"></div>
<div class="b" style="left:1111px;top:220px;width:772px;height:660px;background:#fff;border-left:1px solid #222;border-top:1px solid #222;"></div>
<div class="b" style="left:1883px;top:224px;width:5px;height:656px;background:linear-gradient(90deg,#6a6a6a,#9a9a9a 50%,#c8cbd4);"></div>
<div class="t" style="left:1123.60px;top:252.55px;font-family:'Liberation Serif', serif;font-size:12px;line-height:12px;color:#111;font-weight:700;letter-spacing:0px;font-style:normal;transform:scaleX(0.74);transform-origin:0 0;-webkit-text-stroke:0.45px #111;">Bộ, tỉnh: Thành phố Hà Nội</div>
<div class="t" style="left:1123.60px;top:269.55px;font-family:'Liberation Serif', serif;font-size:12px;line-height:12px;color:#111;font-weight:700;letter-spacing:0px;font-style:normal;transform:scaleX(0.74);transform-origin:0 0;-webkit-text-stroke:0.45px #111;">Cơ quan quản lý cấp trên: Phòng giáo dục MISA 2</div>
<div class="t" style="left:1123.60px;top:286.55px;font-family:'Liberation Serif', serif;font-size:12px;line-height:12px;color:#111;font-weight:700;letter-spacing:0px;font-style:normal;transform:scaleX(0.74);transform-origin:0 0;-webkit-text-stroke:0.45px #111;">Cơ quan, tổ chức, đơn vị sử dụng tài sản: Trường mầm non MISA 2</div>
<div class="t" style="left:1123.60px;top:303.95px;font-family:'Liberation Serif', serif;font-size:12px;line-height:12px;color:#111;font-weight:700;letter-spacing:0px;font-style:normal;transform:scaleX(0.74);transform-origin:0 0;-webkit-text-stroke:0.45px #111;">Mã đơn vị: 1521</div>
<div class="t" style="left:1123.60px;top:320.95px;font-family:'Liberation Serif', serif;font-size:12px;line-height:12px;color:#111;font-weight:700;letter-spacing:0px;font-style:normal;transform:scaleX(0.74);transform-origin:0 0;-webkit-text-stroke:0.45px #111;">Loại hình đơn vị: Khối sự nghiệp</div>
<div class="t" style="left:1717.60px;top:252.25px;font-family:'Liberation Serif', serif;font-size:12px;line-height:12px;color:#111;font-weight:700;letter-spacing:0px;font-style:normal;transform:scaleX(0.72);transform-origin:0 0;-webkit-text-stroke:0.45px #111;">Mẫu số 08a-DK/TSC</div>
<div class="t" style="left:1497.00px;top:356.93px;font-family:'Liberation Serif', serif;font-size:18px;line-height:18px;color:#111;font-weight:700;letter-spacing:0px;font-style:normal;transform:scaleX(0.787) translateX(-50%);transform-origin:0 0;-webkit-text-stroke:0.45px #111;">BÁO CÁO TỔNG HỢP HIỆN TRẠNG SỬ DỤNG TÀI SẢN CÔNG</div>
<div class="t" style="left:1497.00px;top:389.11px;font-family:'Liberation Serif', serif;font-size:13px;line-height:13px;color:#111;font-weight:700;letter-spacing:0px;font-style:normal;transform:scaleX(0.815) translateX(-50%);transform-origin:0 0;-webkit-text-stroke:0.45px #111;">Năm 2018</div>
<div class="t" style="left:1497.00px;top:417.81px;font-family:'Liberation Serif', serif;font-size:13px;line-height:13px;color:#111;font-weight:700;letter-spacing:0px;font-style:normal;transform:scaleX(0.81) translateX(-50%);transform-origin:0 0;-webkit-text-stroke:0.45px #111;">Phần 3: Chi tiết theo từng đơn vị</div>
<div class="t" style="left:1866.00px;top:446.95px;font-family:'Liberation Serif', serif;font-size:12px;line-height:12px;color:#111;font-weight:400;letter-spacing:0px;font-style:italic;transform:scaleX(0.826) translateX(-100%);transform-origin:0 0;-webkit-text-stroke:0.2px #111;">ĐVT cho: Số lượng là: Cái, khuôn viên; Diện tích là: m2</div>
<div class="b" style="left:1121px;top:474px;width:752px;height:102px;background:#d3d3d3;"></div>
<div class="b" style="left:1120px;top:474px;width:754px;height:1px;background:#151515;"></div>
<div class="b" style="left:1385px;top:494px;width:489px;height:1px;background:#151515;"></div>
<div class="b" style="left:1450px;top:514px;width:368px;height:1px;background:#151515;"></div>
<div class="b" style="left:1120px;top:556px;width:754px;height:1px;background:#151515;"></div>
<div class="b" style="left:1120px;top:576px;width:754px;height:1px;background:#151515;"></div>
<div class="b" style="left:1120px;top:608px;width:754px;height:1px;background:#151515;"></div>
<div class="b" style="left:1120px;top:628px;width:754px;height:1px;background:repeating-linear-gradient(90deg,#151515 0 2px,rgba(40,40,40,0.45) 2px 3px);"></div>
<div class="b" style="left:1120px;top:649px;width:754px;height:1px;background:repeating-linear-gradient(90deg,#151515 0 2px,rgba(40,40,40,0.45) 2px 3px);"></div>
<div class="b" style="left:1120px;top:669px;width:754px;height:1px;background:repeating-linear-gradient(90deg,#151515 0 2px,rgba(40,40,40,0.45) 2px 3px);"></div>
<div class="b" style="left:1120px;top:690px;width:754px;height:1px;background:repeating-linear-gradient(90deg,#151515 0 2px,rgba(40,40,40,0.45) 2px 3px);"></div>
<div class="b" style="left:1120px;top:710px;width:754px;height:1px;background:#151515;"></div>
<div class="b" style="left:1120px;top:474px;width:1px;height:238px;background:#151515;"></div>
<div class="b" style="left:1254px;top:474px;width:1px;height:238px;background:#151515;"></div>
<div class="b" style="left:1304px;top:474px;width:1px;height:238px;background:#151515;"></div>
<div class="b" style="left:1385px;top:474px;width:1px;height:238px;background:#151515;"></div>
<div class="b" style="left:1450px;top:494px;width:1px;height:218px;background:#151515;"></div>
<div class="b" style="left:1522px;top:514px;width:1px;height:198px;background:#151515;"></div>
<div class="b" style="left:1597px;top:514px;width:1px;height:198px;background:#151515;"></div>
<div class="b" style="left:1671px;top:514px;width:1px;height:198px;background:#151515;"></div>
<div class="b" style="left:1744px;top:514px;width:1px;height:198px;background:#151515;"></div>
<div class="b" style="left:1818px;top:494px;width:1px;height:218px;background:#151515;"></div>
<div class="b" style="left:1872px;top:474px;width:1px;height:238px;background:#151515;"></div>
<div class="t" style="left:1187.75px;top:508.45px;font-family:'Liberation Serif', serif;font-size:12px;line-height:12px;color:#111;font-weight:700;letter-spacing:0px;font-style:normal;transform:scaleX(0.8) translateX(-50%);transform-origin:0 0;-webkit-text-stroke:0.45px #111;">TÀI SẢN</div>
<div class="t" style="left:1279.25px;top:501.95px;font-family:'Liberation Serif', serif;font-size:12px;line-height:12px;color:#111;font-weight:700;letter-spacing:0px;font-style:normal;transform:scaleX(0.8) translateX(-50%);transform-origin:0 0;-webkit-text-stroke:0.45px #111;">SỐ</div>
<div class="t" style="left:1279.25px;top:515.95px;font-family:'Liberation Serif', serif;font-size:12px;line-height:12px;color:#111;font-weight:700;letter-spacing:0px;font-style:normal;transform:scaleX(0.8) translateX(-50%);transform-origin:0 0;-webkit-text-stroke:0.45px #111;">LƯỢNG</div>
<div class="t" style="left:1344.75px;top:508.45px;font-family:'Liberation Serif', serif;font-size:12px;line-height:12px;color:#111;font-weight:700;letter-spacing:0px;font-style:normal;transform:scaleX(0.8) translateX(-50%);transform-origin:0 0;-webkit-text-stroke:0.45px #111;">DIỆN TÍCH</div>
<div class="t" style="left:1629.00px;top:478.05px;font-family:'Liberation Serif', serif;font-size:12px;line-height:12px;color:#111;font-weight:700;letter-spacing:0px;font-style:normal;transform:scaleX(0.8) translateX(-50%);transform-origin:0 0;-webkit-text-stroke:0.45px #111;">HIỆN TRẠNG SỬ DỤNG</div>
<div class="t" style="left:1634.50px;top:499.55px;font-family:'Liberation Serif', serif;font-size:12px;line-height:12px;color:#111;font-weight:700;letter-spacing:0px;font-style:normal;transform:scaleX(0.8) translateX(-50%);transform-origin:0 0;-webkit-text-stroke:0.45px #111;">Hoạt động sự nghiệp</div>
<div class="t" style="left:1418.25px;top:511.15px;font-family:'Liberation Serif', serif;font-size:12px;line-height:12px;color:#111;font-weight:700;letter-spacing:0px;font-style:normal;transform:scaleX(0.81) translateX(-50%);transform-origin:0 0;-webkit-text-stroke:0.45px #111;">Quản lý nhà</div>
<div class="t" style="left:1418.25px;top:526.15px;font-family:'Liberation Serif', serif;font-size:12px;line-height:12px;color:#111;font-weight:700;letter-spacing:0px;font-style:normal;transform:scaleX(0.81) translateX(-50%);transform-origin:0 0;-webkit-text-stroke:0.45px #111;">nước</div>
<div class="t" style="left:1487.00px;top:521.45px;font-family:'Liberation Serif', serif;font-size:12px;line-height:12px;color:#111;font-weight:700;letter-spacing:0px;font-style:normal;transform:scaleX(0.81) translateX(-50%);transform-origin:0 0;-webkit-text-stroke:0.45px #111;">Không kinh</div>
<div class="t" style="left:1487.00px;top:535.25px;font-family:'Liberation Serif', serif;font-size:12px;line-height:12px;color:#111;font-weight:700;letter-spacing:0px;font-style:normal;transform:scaleX(0.81) translateX(-50%);transform-origin:0 0;-webkit-text-stroke:0.45px #111;">doanh</div>
<div class="t" style="left:1560.25px;top:529.65px;font-family:'Liberation Serif', serif;font-size:12px;line-height:12px;color:#111;font-weight:700;letter-spacing:0px;font-style:normal;transform:scaleX(0.81) translateX(-50%);transform-origin:0 0;-webkit-text-stroke:0.45px #111;">Kinh doanh</div>
<div class="t" style="left:1634.50px;top:529.65px;font-family:'Liberation Serif', serif;font-size:12px;line-height:12px;color:#111;font-weight:700;letter-spacing:0px;font-style:normal;transform:scaleX(0.81) translateX(-50%);transform-origin:0 0;-webkit-text-stroke:0.45px #111;">Cho thuê</div>
<div class="t" style="left:1708.00px;top:522.55px;font-family:'Liberation Serif', serif;font-size:12px;line-height:12px;color:#111;font-weight:700;letter-spacing:0px;font-style:normal;transform:scaleX(0.81) translateX(-50%);transform-origin:0 0;-webkit-text-stroke:0.45px #111;">Liên doanh,</div>
<div class="t" style="left:1708.00px;top:537.25px;font-family:'Liberation Serif', serif;font-size:12px;line-height:12px;color:#111;font-weight:700;letter-spacing:0px;font-style:normal;transform:scaleX(0.81) translateX(-50%);transform-origin:0 0;-webkit-text-stroke:0.45px #111;">liên kết</div>
<div class="t" style="left:1781.25px;top:522.55px;font-family:'Liberation Serif', serif;font-size:12px;line-height:12px;color:#111;font-weight:700;letter-spacing:0px;font-style:normal;transform:scaleX(0.81) translateX(-50%);transform-origin:0 0;-webkit-text-stroke:0.45px #111;">Sử dụng hỗn</div>
<div class="t" style="left:1781.25px;top:537.25px;font-family:'Liberation Serif', serif;font-size:12px;line-height:12px;color:#111;font-weight:700;letter-spacing:0px;font-style:normal;transform:scaleX(0.81) translateX(-50%);transform-origin:0 0;-webkit-text-stroke:0.45px #111;">hợp</div>
<div class="t" style="left:1845.50px;top:511.95px;font-family:'Liberation Serif', serif;font-size:12px;line-height:12px;color:#111;font-weight:700;letter-spacing:0px;font-style:normal;transform:scaleX(0.81) translateX(-50%);transform-origin:0 0;-webkit-text-stroke:0.45px #111;">Sử dụng</div>
<div class="t" style="left:1845.50px;top:526.35px;font-family:'Liberation Serif', serif;font-size:12px;line-height:12px;color:#111;font-weight:700;letter-spacing:0px;font-style:normal;transform:scaleX(0.81) translateX(-50%);transform-origin:0 0;-webkit-text-stroke:0.45px #111;">khác</div>
<div class="t" style="left:1187.75px;top:559.75px;font-family:'Liberation Serif', serif;font-size:12px;line-height:12px;color:#111;font-weight:400;letter-spacing:0px;font-style:italic;transform:scaleX(0.81) translateX(-50%);transform-origin:0 0;-webkit-text-stroke:0.2px #111;">1</div>
<div class="t" style="left:1279.25px;top:559.75px;font-family:'Liberation Serif', serif;font-size:12px;line-height:12px;color:#111;font-weight:400;letter-spacing:0px;font-style:italic;transform:scaleX(0.81) translateX(-50%);transform-origin:0 0;-webkit-text-stroke:0.2px #111;">2</div>
<div class="t" style="left:1344.75px;top:559.75px;font-family:'Liberation Serif', serif;font-size:12px;line-height:12px;color:#111;font-weight:400;letter-spacing:0px;font-style:italic;transform:scaleX(0.81) translateX(-50%);transform-origin:0 0;-webkit-text-stroke:0.2px #111;">3</div>
<div class="t" style="left:1418.25px;top:559.75px;font-family:'Liberation Serif', serif;font-size:12px;line-height:12px;color:#111;font-weight:400;letter-spacing:0px;font-style:italic;transform:scaleX(0.81) translateX(-50%);transform-origin:0 0;-webkit-text-stroke:0.2px #111;">4</div>
<div class="t" style="left:1487.00px;top:559.75px;font-family:'Liberation Serif', serif;font-size:12px;line-height:12px;color:#111;font-weight:400;letter-spacing:0px;font-style:italic;transform:scaleX(0.81) translateX(-50%);transform-origin:0 0;-webkit-text-stroke:0.2px #111;">5</div>
<div class="t" style="left:1560.25px;top:559.75px;font-family:'Liberation Serif', serif;font-size:12px;line-height:12px;color:#111;font-weight:400;letter-spacing:0px;font-style:italic;transform:scaleX(0.81) translateX(-50%);transform-origin:0 0;-webkit-text-stroke:0.2px #111;">6</div>
<div class="t" style="left:1634.50px;top:559.75px;font-family:'Liberation Serif', serif;font-size:12px;line-height:12px;color:#111;font-weight:400;letter-spacing:0px;font-style:italic;transform:scaleX(0.81) translateX(-50%);transform-origin:0 0;-webkit-text-stroke:0.2px #111;">7</div>
<div class="t" style="left:1708.00px;top:559.75px;font-family:'Liberation Serif', serif;font-size:12px;line-height:12px;color:#111;font-weight:400;letter-spacing:0px;font-style:italic;transform:scaleX(0.81) translateX(-50%);transform-origin:0 0;-webkit-text-stroke:0.2px #111;">8</div>
<div class="t" style="left:1781.25px;top:559.75px;font-family:'Liberation Serif', serif;font-size:12px;line-height:12px;color:#111;font-weight:400;letter-spacing:0px;font-style:italic;transform:scaleX(0.81) translateX(-50%);transform-origin:0 0;-webkit-text-stroke:0.2px #111;">9</div>
<div class="t" style="left:1845.50px;top:559.75px;font-family:'Liberation Serif', serif;font-size:12px;line-height:12px;color:#111;font-weight:400;letter-spacing:0px;font-style:italic;transform:scaleX(0.81) translateX(-50%);transform-origin:0 0;-webkit-text-stroke:0.2px #111;">10</div>
<div class="t" style="left:1124.00px;top:579.25px;font-family:'Liberation Serif', serif;font-size:12px;line-height:12px;color:#111;font-weight:700;letter-spacing:0px;font-style:normal;transform:scaleX(0.81);transform-origin:0 0;-webkit-text-stroke:0.45px #111;">1 - Trường mầm non MISA 2 -</div>
<div class="t" style="left:1124.00px;top:593.45px;font-family:'Liberation Serif', serif;font-size:12px;line-height:12px;color:#111;font-weight:700;letter-spacing:0px;font-style:normal;transform:scaleX(0.81);transform-origin:0 0;-webkit-text-stroke:0.45px #111;">1521</div>
<div class="t" style="left:1301.50px;top:588.41px;font-family:'Liberation Sans', sans-serif;font-size:10.5px;line-height:10.5px;color:#111;font-weight:700;letter-spacing:0px;font-style:normal;transform:scaleX(0.7) translateX(-100%);transform-origin:0 0;">10</div>
<div class="t" style="left:1382.50px;top:588.41px;font-family:'Liberation Sans', sans-serif;font-size:10.5px;line-height:10.5px;color:#111;font-weight:700;letter-spacing:0px;font-style:normal;transform:scaleX(0.7) translateX(-100%);transform-origin:0 0;">1.050</div>
<div class="t" style="left:1124.00px;top:612.65px;font-family:'Liberation Serif', serif;font-size:12px;line-height:12px;color:#111;font-weight:400;letter-spacing:0px;font-style:normal;transform:scaleX(0.81);transform-origin:0 0;-webkit-text-stroke:0.2px #111;">- Đất khuôn viên</div>
<div class="t" style="left:1301.50px;top:614.61px;font-family:'Liberation Sans', sans-serif;font-size:10.5px;line-height:10.5px;color:#111;font-weight:400;letter-spacing:0px;font-style:normal;transform:scaleX(0.7) translateX(-100%);transform-origin:0 0;">1</div>
<div class="t" style="left:1382.50px;top:614.61px;font-family:'Liberation Sans', sans-serif;font-size:10.5px;line-height:10.5px;color:#111;font-weight:400;letter-spacing:0px;font-style:normal;transform:scaleX(0.7) translateX(-100%);transform-origin:0 0;">500</div>
<div class="t" style="left:1448.50px;top:614.61px;font-family:'Liberation Sans', sans-serif;font-size:10.5px;line-height:10.5px;color:#111;font-weight:400;letter-spacing:0px;font-style:normal;transform:scaleX(0.7) translateX(-100%);transform-origin:0 0;">300</div>
<div class="t" style="left:1520.50px;top:614.61px;font-family:'Liberation Sans', sans-serif;font-size:10.5px;line-height:10.5px;color:#111;font-weight:400;letter-spacing:0px;font-style:normal;transform:scaleX(0.7) translateX(-100%);transform-origin:0 0;">100</div>
<div class="t" style="left:1595.00px;top:614.61px;font-family:'Liberation Sans', sans-serif;font-size:10.5px;line-height:10.5px;color:#111;font-weight:400;letter-spacing:0px;font-style:normal;transform:scaleX(0.7) translateX(-100%);transform-origin:0 0;">50</div>
<div class="t" style="left:1870.50px;top:614.61px;font-family:'Liberation Sans', sans-serif;font-size:10.5px;line-height:10.5px;color:#111;font-weight:400;letter-spacing:0px;font-style:normal;transform:scaleX(0.7) translateX(-100%);transform-origin:0 0;">50</div>
<div class="t" style="left:1124.00px;top:633.25px;font-family:'Liberation Serif', serif;font-size:12px;line-height:12px;color:#111;font-weight:400;letter-spacing:0px;font-style:normal;transform:scaleX(0.81);transform-origin:0 0;-webkit-text-stroke:0.2px #111;">- Nhà</div>
<div class="t" style="left:1301.50px;top:635.21px;font-family:'Liberation Sans', sans-serif;font-size:10.5px;line-height:10.5px;color:#111;font-weight:400;letter-spacing:0px;font-style:normal;transform:scaleX(0.7) translateX(-100%);transform-origin:0 0;">2</div>
<div class="t" style="left:1382.50px;top:635.21px;font-family:'Liberation Sans', sans-serif;font-size:10.5px;line-height:10.5px;color:#111;font-weight:400;letter-spacing:0px;font-style:normal;transform:scaleX(0.7) translateX(-100%);transform-origin:0 0;">550</div>
<div class="t" style="left:1448.50px;top:635.21px;font-family:'Liberation Sans', sans-serif;font-size:10.5px;line-height:10.5px;color:#111;font-weight:400;letter-spacing:0px;font-style:normal;transform:scaleX(0.7) translateX(-100%);transform-origin:0 0;">2</div>
<div class="t" style="left:1520.50px;top:635.21px;font-family:'Liberation Sans', sans-serif;font-size:10.5px;line-height:10.5px;color:#111;font-weight:400;letter-spacing:0px;font-style:normal;transform:scaleX(0.7) translateX(-100%);transform-origin:0 0;">100</div>
<div class="t" style="left:1669.00px;top:635.21px;font-family:'Liberation Sans', sans-serif;font-size:10.5px;line-height:10.5px;color:#111;font-weight:400;letter-spacing:0px;font-style:normal;transform:scaleX(0.7) translateX(-100%);transform-origin:0 0;">100</div>
<div class="t" style="left:1815.50px;top:635.21px;font-family:'Liberation Sans', sans-serif;font-size:10.5px;line-height:10.5px;color:#111;font-weight:400;letter-spacing:0px;font-style:normal;transform:scaleX(0.7) translateX(-100%);transform-origin:0 0;">100</div>
<div class="t" style="left:1870.50px;top:635.21px;font-family:'Liberation Sans', sans-serif;font-size:10.5px;line-height:10.5px;color:#111;font-weight:400;letter-spacing:0px;font-style:normal;transform:scaleX(0.7) translateX(-100%);transform-origin:0 0;">50</div>
<div class="t" style="left:1124.00px;top:653.55px;font-family:'Liberation Serif', serif;font-size:12px;line-height:12px;color:#111;font-weight:400;letter-spacing:0px;font-style:normal;transform:scaleX(0.81);transform-origin:0 0;-webkit-text-stroke:0.2px #111;">- Xe ô tô</div>
<div class="t" style="left:1301.50px;top:655.51px;font-family:'Liberation Sans', sans-serif;font-size:10.5px;line-height:10.5px;color:#111;font-weight:400;letter-spacing:0px;font-style:normal;transform:scaleX(0.7) translateX(-100%);transform-origin:0 0;">2</div>
<div class="t" style="left:1448.50px;top:655.51px;font-family:'Liberation Sans', sans-serif;font-size:10.5px;line-height:10.5px;color:#111;font-weight:400;letter-spacing:0px;font-style:normal;transform:scaleX(0.7) translateX(-100%);transform-origin:0 0;">1</div>
<div class="t" style="left:1815.50px;top:655.51px;font-family:'Liberation Sans', sans-serif;font-size:10.5px;line-height:10.5px;color:#111;font-weight:400;letter-spacing:0px;font-style:normal;transform:scaleX(0.7) translateX(-100%);transform-origin:0 0;">1</div>
<div class="t" style="left:1124.00px;top:673.15px;font-family:'Liberation Serif', serif;font-size:12px;line-height:12px;color:#111;font-weight:400;letter-spacing:0px;font-style:normal;transform:scaleX(0.81);transform-origin:0 0;-webkit-text-stroke:0.2px #111;">- Tài sản cố định khác</div>
<div class="t" style="left:1301.50px;top:675.11px;font-family:'Liberation Sans', sans-serif;font-size:10.5px;line-height:10.5px;color:#111;font-weight:400;letter-spacing:0px;font-style:normal;transform:scaleX(0.7) translateX(-100%);transform-origin:0 0;">5</div>
<div class="t" style="left:1815.50px;top:675.11px;font-family:'Liberation Sans', sans-serif;font-size:10.5px;line-height:10.5px;color:#111;font-weight:400;letter-spacing:0px;font-style:normal;transform:scaleX(0.7) translateX(-100%);transform-origin:0 0;">5</div>
<div class="t" style="left:1187.80px;top:694.45px;font-family:'Liberation Serif', serif;font-size:12px;line-height:12px;color:#111;font-weight:700;letter-spacing:0px;font-style:normal;transform:scaleX(0.81) translateX(-50%);transform-origin:0 0;-webkit-text-stroke:0.45px #111;">Tổng cộng</div>
<div class="t" style="left:1301.50px;top:696.41px;font-family:'Liberation Sans', sans-serif;font-size:10.5px;line-height:10.5px;color:#111;font-weight:700;letter-spacing:0px;font-style:normal;transform:scaleX(0.7) translateX(-100%);transform-origin:0 0;">10</div>
<div class="t" style="left:1382.50px;top:696.41px;font-family:'Liberation Sans', sans-serif;font-size:10.5px;line-height:10.5px;color:#111;font-weight:700;letter-spacing:0px;font-style:normal;transform:scaleX(0.7) translateX(-100%);transform-origin:0 0;">1.050</div>
<div class="t" style="left:1713.50px;top:725.25px;font-family:'Liberation Serif', serif;font-size:12px;line-height:12px;color:#111;font-weight:400;letter-spacing:0px;font-style:italic;transform:scaleX(0.81) translateX(-50%);transform-origin:0 0;-webkit-text-stroke:0.2px #111;">........, ngày .... tháng .... năm .....</div>
<div class="t" style="left:1288.50px;top:744.95px;font-family:'Liberation Serif', serif;font-size:12px;line-height:12px;color:#111;font-weight:700;letter-spacing:0px;font-style:normal;transform:scaleX(0.81) translateX(-50%);transform-origin:0 0;-webkit-text-stroke:0.45px #111;">Người lập</div>
<div class="t" style="left:1713.00px;top:744.95px;font-family:'Liberation Serif', serif;font-size:12px;line-height:12px;color:#111;font-weight:700;letter-spacing:0px;font-style:normal;transform:scaleX(0.81) translateX(-50%);transform-origin:0 0;-webkit-text-stroke:0.45px #111;">Giám đốc</div>
<div class="t" style="left:1288.50px;top:765.95px;font-family:'Liberation Serif', serif;font-size:12px;line-height:12px;color:#111;font-weight:400;letter-spacing:0px;font-style:italic;transform:scaleX(0.81) translateX(-50%);transform-origin:0 0;-webkit-text-stroke:0.2px #111;">(Ký, họ tên)</div>
<div class="t" style="left:1713.00px;top:765.95px;font-family:'Liberation Serif', serif;font-size:12px;line-height:12px;color:#111;font-weight:400;letter-spacing:0px;font-style:italic;transform:scaleX(0.81) translateX(-50%);transform-origin:0 0;-webkit-text-stroke:0.2px #111;">(Ký, họ tên và đóng dấu)</div>
<div class="t" style="left:1288.50px;top:850.95px;font-family:'Liberation Serif', serif;font-size:12px;line-height:12px;color:#111;font-weight:700;letter-spacing:0px;font-style:normal;transform:scaleX(0.81) translateX(-50%);transform-origin:0 0;-webkit-text-stroke:0.45px #111;">Trần Tâm</div>
<div class="t" style="left:1713.00px;top:850.95px;font-family:'Liberation Serif', serif;font-size:12px;line-height:12px;color:#111;font-weight:700;letter-spacing:0px;font-style:normal;transform:scaleX(0.81) translateX(-50%);transform-origin:0 0;-webkit-text-stroke:0.45px #111;">Đinh Thành Nam</div>
<div class="t" style="left:1493px;top:597px;font-family:'Liberation Serif',serif;font-size:65px;line-height:65px;font-weight:700;color:#6ea4cc;-webkit-text-stroke:4px #6ea4cc;transform:translate(-50%,-50%) rotate(-45deg) scaleX(0.9);">BÁO CÁO MẪU</div>
<svg class="b" style="left:1111px;top:856px" width="772" height="24" viewBox="0 0 772 24">
<defs><filter id="bl" x="-5%" y="-100%" width="110%" height="300%"><feGaussianBlur stdDeviation="1.2"/></filter>
<clipPath id="cb"><path d="M0 40 L0.0 0.4 L1.6 0.7 L3.3 1.0 L4.9 1.3 L6.6 2.4 L8.2 2.9 L9.8 4.0 L11.5 4.5 L13.0 4.2 L14.5 3.9 L16.1 4.6 L17.6 3.6 L19.1 3.8 L20.7 4.4 L22.2 4.6 L23.7 4.1 L25.3 4.7 L26.8 5.1 L29.0 7.0 L31.1 9.6 L32.8 8.1 L34.5 6.9 L36.2 6.4 L37.9 4.3 L39.6 3.7 L41.2 2.4 L42.9 0.7 L44.5 2.0 L46.1 4.7 L47.7 5.9 L49.3 7.5 L50.9 9.2 L52.5 11.8 L54.1 11.0 L55.7 10.5 L57.2 10.6 L58.8 10.0 L60.3 10.4 L61.9 10.0 L63.4 9.6 L65.3 8.7 L67.1 7.2 L69.0 4.8 L70.8 3.9 L72.8 2.5 L74.7 2.3 L76.7 1.0 L78.3 1.6 L80.0 2.8 L81.6 3.8 L83.2 6.0 L84.9 6.4 L86.5 7.9 L88.1 9.0 L89.7 9.3 L91.3 9.3 L92.9 9.6 L94.5 8.9 L96.1 9.8 L97.8 9.3 L99.4 9.7 L101.0 9.6 L102.6 9.6 L104.2 9.1 L105.7 8.1 L107.3 7.2 L108.9 6.8 L110.5 5.8 L112.0 4.3 L113.6 3.7 L115.2 3.1 L116.8 2.8 L118.4 1.9 L119.9 2.2 L121.5 2.3 L123.0 3.9 L124.6 4.1 L126.1 5.0 L127.7 5.9 L129.2 6.5 L130.8 7.0 L132.3 8.2 L133.9 8.3 L135.5 7.0 L137.1 6.3 L138.7 4.3 L140.4 3.2 L141.9 3.7 L143.5 2.5 L145.0 3.3 L146.6 2.9 L148.2 2.4 L149.7 2.0 L151.3 2.4 L152.8 2.4 L154.4 1.3 L156.0 1.5 L157.6 3.2 L159.3 4.7 L161.0 6.1 L162.6 7.5 L164.3 9.7 L165.9 10.6 L167.5 10.3 L169.1 11.1 L171.1 9.4 L173.1 7.0 L174.7 6.0 L176.2 4.4 L177.7 4.4 L179.3 3.8 L180.8 3.0 L182.4 3.9 L183.9 4.3 L185.5 6.5 L187.1 7.0 L188.6 8.7 L190.2 6.3 L191.7 3.2 L193.3 -0.3 L194.9 -0.1 L196.6 0.6 L198.2 -0.3 L199.8 0.2 L201.4 -0.0 L203.1 -0.3 L204.7 0.2 L206.3 -0.5 L208.0 0.6 L209.7 1.9 L211.3 2.5 L213.0 3.5 L214.7 5.1 L216.4 6.2 L218.1 7.4 L219.8 7.5 L221.8 8.7 L223.9 9.5 L225.4 10.1 L227.0 10.2 L228.5 10.9 L230.0 10.5 L231.6 10.3 L233.1 11.3 L234.7 10.9 L236.2 11.7 L237.8 11.8 L239.3 12.5 L240.8 11.1 L242.4 10.1 L243.9 8.6 L245.4 8.0 L246.9 6.6 L248.4 6.1 L249.9 4.8 L251.5 3.3 L253.0 2.4 L254.5 1.6 L256.1 3.4 L257.8 4.2 L259.4 6.3 L261.1 7.6 L262.7 8.4 L264.5 7.4 L266.3 5.1 L268.0 3.5 L269.6 5.1 L271.2 5.6 L272.8 7.4 L274.4 7.9 L276.0 8.7 L277.6 10.2 L279.2 10.3 L280.8 12.1 L282.4 12.2 L284.0 11.9 L285.7 12.4 L287.4 11.7 L288.9 11.2 L290.4 11.2 L292.0 12.4 L293.5 12.1 L295.0 12.5 L296.5 11.8 L298.0 12.5 L299.5 12.3 L301.0 12.3 L302.5 12.5 L304.0 12.5 L305.5 11.8 L307.0 11.5 L308.5 10.9 L310.0 11.4 L311.5 10.8 L313.0 10.6 L314.5 10.0 L316.1 10.4 L317.6 9.8 L319.1 9.7 L320.7 8.6 L322.2 7.7 L323.7 6.2 L325.3 4.7 L326.8 3.5 L328.3 2.6 L329.9 1.4 L331.4 1.3 L332.9 1.4 L334.5 2.4 L336.0 2.1 L337.8 4.4 L339.5 6.6 L341.3 8.0 L343.1 9.5 L344.9 11.3 L346.4 10.4 L348.0 10.0 L349.5 9.5 L351.0 9.3 L352.6 8.9 L354.1 9.0 L355.7 7.6 L357.2 7.3 L358.8 6.8 L360.3 4.4 L361.9 2.2 L363.4 -0.2 L365.1 0.2 L366.7 -0.2 L368.4 0.9 L370.1 0.3 L371.7 1.1 L373.4 0.9 L375.0 1.2 L376.6 1.2 L378.2 2.1 L379.8 1.4 L381.4 2.4 L382.9 2.3 L384.5 3.0 L386.1 3.4 L387.8 3.7 L389.5 4.7 L391.2 5.4 L392.9 6.6 L394.6 7.4 L396.2 8.7 L397.9 10.4 L399.6 10.6 L401.5 7.4 L403.5 4.5 L405.4 1.2 L407.0 2.2 L408.5 2.7 L410.1 2.5 L411.7 3.0 L413.3 4.0 L414.8 4.8 L416.4 4.8 L418.0 4.8 L419.5 5.8 L421.1 4.9 L422.7 5.3 L424.3 6.5 L425.8 6.4 L427.4 6.3 L429.0 7.2 L430.5 8.0 L432.1 7.3 L433.7 7.0 L435.3 6.6 L436.9 6.4 L438.5 7.3 L440.1 6.7 L441.7 7.1 L443.3 5.9 L445.1 7.0 L446.8 7.5 L448.6 8.8 L450.4 9.2 L452.1 10.2 L453.7 9.7 L455.3 8.8 L456.9 7.8 L458.5 7.0 L460.1 7.4 L461.7 5.7 L463.2 5.4 L464.8 4.5 L466.4 3.9 L468.0 2.6 L469.7 3.9 L471.3 4.7 L473.0 6.3 L474.7 7.8 L476.3 8.4 L478.0 9.8 L479.8 7.8 L481.6 6.3 L483.4 5.6 L485.3 4.3 L486.9 4.3 L488.6 4.0 L490.3 4.2 L491.9 4.2 L493.6 4.4 L495.1 4.3 L496.7 5.0 L498.2 6.1 L499.8 6.0 L501.3 6.5 L502.8 7.3 L504.4 7.7 L505.9 9.1 L507.6 7.7 L509.3 5.6 L510.9 3.9 L512.6 2.4 L514.3 1.1 L515.9 1.2 L517.6 2.0 L519.2 2.5 L520.8 2.5 L522.5 2.6 L524.1 3.7 L525.6 2.9 L527.1 3.0 L528.6 3.1 L530.1 3.1 L531.6 2.8 L533.2 4.3 L534.8 5.3 L536.3 7.0 L537.9 7.9 L539.5 9.4 L541.0 10.2 L542.6 11.5 L544.4 10.3 L546.1 9.2 L547.9 8.7 L549.6 7.5 L551.2 8.0 L552.7 8.0 L554.2 8.1 L555.8 7.8 L557.3 8.6 L558.8 8.3 L560.4 8.2 L561.9 8.3 L563.4 8.6 L565.1 8.6 L566.7 9.1 L568.3 8.6 L570.0 8.2 L571.6 9.0 L573.1 8.8 L574.7 8.2 L576.2 8.3 L577.8 8.5 L579.3 8.8 L580.9 9.5 L582.4 9.6 L584.0 9.3 L585.5 8.9 L587.1 9.2 L588.7 9.2 L590.4 9.2 L592.0 8.9 L593.6 9.7 L595.2 10.1 L596.8 10.0 L598.4 9.3 L600.0 9.9 L601.5 9.3 L603.1 9.7 L604.6 9.1 L606.2 9.5 L607.7 9.1 L609.3 8.1 L610.8 8.1 L612.4 8.6 L613.9 7.8 L615.5 7.6 L617.5 6.6 L619.5 6.0 L621.4 5.2 L623.1 5.4 L624.7 6.6 L626.3 6.8 L627.9 6.8 L629.6 8.3 L631.2 8.5 L632.8 8.5 L634.4 10.1 L636.0 9.4 L637.6 10.5 L639.2 10.8 L640.7 11.7 L642.3 11.6 L643.9 11.8 L645.5 11.1 L647.1 10.3 L648.6 10.0 L650.2 9.1 L651.8 8.8 L653.3 7.5 L654.9 6.9 L656.6 6.2 L658.2 6.6 L659.8 5.8 L661.5 5.3 L663.1 4.4 L664.8 3.6 L666.4 2.8 L668.0 4.4 L669.6 4.8 L671.1 5.1 L672.7 6.0 L674.3 6.7 L675.9 8.3 L677.5 9.3 L679.0 9.3 L680.6 9.4 L682.1 8.2 L683.7 8.1 L685.2 7.7 L686.8 6.8 L688.3 6.5 L689.9 5.8 L691.4 5.3 L692.9 5.8 L694.4 5.8 L696.0 5.2 L697.5 5.3 L699.0 5.1 L700.6 4.6 L702.2 5.7 L703.8 6.4 L705.4 7.2 L707.0 8.1 L708.6 8.4 L710.2 9.8 L712.1 9.8 L714.0 10.1 L715.8 10.0 L717.4 10.2 L719.0 10.3 L720.6 10.9 L722.1 10.7 L723.9 10.4 L725.6 9.9 L727.3 9.1 L729.0 8.3 L730.7 7.4 L732.4 5.5 L734.1 3.8 L735.8 2.1 L737.6 0.3 L739.3 2.4 L741.1 4.0 L742.9 6.9 L744.7 8.2 L746.4 10.9 L748.2 7.2 L750.0 5.1 L751.8 2.1 L754.0 4.2 L756.2 6.0 L757.7 6.5 L759.3 7.6 L760.8 8.3 L762.3 8.9 L763.8 9.3 L765.3 10.5 L766.8 11.8 L768.5 7.9 L770.3 5.7 L772.0 2.1 L772 40 Z"/></clipPath></defs>
<path d="M0 40 L0.0 0.4 L1.6 0.7 L3.3 1.0 L4.9 1.3 L6.6 2.4 L8.2 2.9 L9.8 4.0 L11.5 4.5 L13.0 4.2 L14.5 3.9 L16.1 4.6 L17.6 3.6 L19.1 3.8 L20.7 4.4 L22.2 4.6 L23.7 4.1 L25.3 4.7 L26.8 5.1 L29.0 7.0 L31.1 9.6 L32.8 8.1 L34.5 6.9 L36.2 6.4 L37.9 4.3 L39.6 3.7 L41.2 2.4 L42.9 0.7 L44.5 2.0 L46.1 4.7 L47.7 5.9 L49.3 7.5 L50.9 9.2 L52.5 11.8 L54.1 11.0 L55.7 10.5 L57.2 10.6 L58.8 10.0 L60.3 10.4 L61.9 10.0 L63.4 9.6 L65.3 8.7 L67.1 7.2 L69.0 4.8 L70.8 3.9 L72.8 2.5 L74.7 2.3 L76.7 1.0 L78.3 1.6 L80.0 2.8 L81.6 3.8 L83.2 6.0 L84.9 6.4 L86.5 7.9 L88.1 9.0 L89.7 9.3 L91.3 9.3 L92.9 9.6 L94.5 8.9 L96.1 9.8 L97.8 9.3 L99.4 9.7 L101.0 9.6 L102.6 9.6 L104.2 9.1 L105.7 8.1 L107.3 7.2 L108.9 6.8 L110.5 5.8 L112.0 4.3 L113.6 3.7 L115.2 3.1 L116.8 2.8 L118.4 1.9 L119.9 2.2 L121.5 2.3 L123.0 3.9 L124.6 4.1 L126.1 5.0 L127.7 5.9 L129.2 6.5 L130.8 7.0 L132.3 8.2 L133.9 8.3 L135.5 7.0 L137.1 6.3 L138.7 4.3 L140.4 3.2 L141.9 3.7 L143.5 2.5 L145.0 3.3 L146.6 2.9 L148.2 2.4 L149.7 2.0 L151.3 2.4 L152.8 2.4 L154.4 1.3 L156.0 1.5 L157.6 3.2 L159.3 4.7 L161.0 6.1 L162.6 7.5 L164.3 9.7 L165.9 10.6 L167.5 10.3 L169.1 11.1 L171.1 9.4 L173.1 7.0 L174.7 6.0 L176.2 4.4 L177.7 4.4 L179.3 3.8 L180.8 3.0 L182.4 3.9 L183.9 4.3 L185.5 6.5 L187.1 7.0 L188.6 8.7 L190.2 6.3 L191.7 3.2 L193.3 -0.3 L194.9 -0.1 L196.6 0.6 L198.2 -0.3 L199.8 0.2 L201.4 -0.0 L203.1 -0.3 L204.7 0.2 L206.3 -0.5 L208.0 0.6 L209.7 1.9 L211.3 2.5 L213.0 3.5 L214.7 5.1 L216.4 6.2 L218.1 7.4 L219.8 7.5 L221.8 8.7 L223.9 9.5 L225.4 10.1 L227.0 10.2 L228.5 10.9 L230.0 10.5 L231.6 10.3 L233.1 11.3 L234.7 10.9 L236.2 11.7 L237.8 11.8 L239.3 12.5 L240.8 11.1 L242.4 10.1 L243.9 8.6 L245.4 8.0 L246.9 6.6 L248.4 6.1 L249.9 4.8 L251.5 3.3 L253.0 2.4 L254.5 1.6 L256.1 3.4 L257.8 4.2 L259.4 6.3 L261.1 7.6 L262.7 8.4 L264.5 7.4 L266.3 5.1 L268.0 3.5 L269.6 5.1 L271.2 5.6 L272.8 7.4 L274.4 7.9 L276.0 8.7 L277.6 10.2 L279.2 10.3 L280.8 12.1 L282.4 12.2 L284.0 11.9 L285.7 12.4 L287.4 11.7 L288.9 11.2 L290.4 11.2 L292.0 12.4 L293.5 12.1 L295.0 12.5 L296.5 11.8 L298.0 12.5 L299.5 12.3 L301.0 12.3 L302.5 12.5 L304.0 12.5 L305.5 11.8 L307.0 11.5 L308.5 10.9 L310.0 11.4 L311.5 10.8 L313.0 10.6 L314.5 10.0 L316.1 10.4 L317.6 9.8 L319.1 9.7 L320.7 8.6 L322.2 7.7 L323.7 6.2 L325.3 4.7 L326.8 3.5 L328.3 2.6 L329.9 1.4 L331.4 1.3 L332.9 1.4 L334.5 2.4 L336.0 2.1 L337.8 4.4 L339.5 6.6 L341.3 8.0 L343.1 9.5 L344.9 11.3 L346.4 10.4 L348.0 10.0 L349.5 9.5 L351.0 9.3 L352.6 8.9 L354.1 9.0 L355.7 7.6 L357.2 7.3 L358.8 6.8 L360.3 4.4 L361.9 2.2 L363.4 -0.2 L365.1 0.2 L366.7 -0.2 L368.4 0.9 L370.1 0.3 L371.7 1.1 L373.4 0.9 L375.0 1.2 L376.6 1.2 L378.2 2.1 L379.8 1.4 L381.4 2.4 L382.9 2.3 L384.5 3.0 L386.1 3.4 L387.8 3.7 L389.5 4.7 L391.2 5.4 L392.9 6.6 L394.6 7.4 L396.2 8.7 L397.9 10.4 L399.6 10.6 L401.5 7.4 L403.5 4.5 L405.4 1.2 L407.0 2.2 L408.5 2.7 L410.1 2.5 L411.7 3.0 L413.3 4.0 L414.8 4.8 L416.4 4.8 L418.0 4.8 L419.5 5.8 L421.1 4.9 L422.7 5.3 L424.3 6.5 L425.8 6.4 L427.4 6.3 L429.0 7.2 L430.5 8.0 L432.1 7.3 L433.7 7.0 L435.3 6.6 L436.9 6.4 L438.5 7.3 L440.1 6.7 L441.7 7.1 L443.3 5.9 L445.1 7.0 L446.8 7.5 L448.6 8.8 L450.4 9.2 L452.1 10.2 L453.7 9.7 L455.3 8.8 L456.9 7.8 L458.5 7.0 L460.1 7.4 L461.7 5.7 L463.2 5.4 L464.8 4.5 L466.4 3.9 L468.0 2.6 L469.7 3.9 L471.3 4.7 L473.0 6.3 L474.7 7.8 L476.3 8.4 L478.0 9.8 L479.8 7.8 L481.6 6.3 L483.4 5.6 L485.3 4.3 L486.9 4.3 L488.6 4.0 L490.3 4.2 L491.9 4.2 L493.6 4.4 L495.1 4.3 L496.7 5.0 L498.2 6.1 L499.8 6.0 L501.3 6.5 L502.8 7.3 L504.4 7.7 L505.9 9.1 L507.6 7.7 L509.3 5.6 L510.9 3.9 L512.6 2.4 L514.3 1.1 L515.9 1.2 L517.6 2.0 L519.2 2.5 L520.8 2.5 L522.5 2.6 L524.1 3.7 L525.6 2.9 L527.1 3.0 L528.6 3.1 L530.1 3.1 L531.6 2.8 L533.2 4.3 L534.8 5.3 L536.3 7.0 L537.9 7.9 L539.5 9.4 L541.0 10.2 L542.6 11.5 L544.4 10.3 L546.1 9.2 L547.9 8.7 L549.6 7.5 L551.2 8.0 L552.7 8.0 L554.2 8.1 L555.8 7.8 L557.3 8.6 L558.8 8.3 L560.4 8.2 L561.9 8.3 L563.4 8.6 L565.1 8.6 L566.7 9.1 L568.3 8.6 L570.0 8.2 L571.6 9.0 L573.1 8.8 L574.7 8.2 L576.2 8.3 L577.8 8.5 L579.3 8.8 L580.9 9.5 L582.4 9.6 L584.0 9.3 L585.5 8.9 L587.1 9.2 L588.7 9.2 L590.4 9.2 L592.0 8.9 L593.6 9.7 L595.2 10.1 L596.8 10.0 L598.4 9.3 L600.0 9.9 L601.5 9.3 L603.1 9.7 L604.6 9.1 L606.2 9.5 L607.7 9.1 L609.3 8.1 L610.8 8.1 L612.4 8.6 L613.9 7.8 L615.5 7.6 L617.5 6.6 L619.5 6.0 L621.4 5.2 L623.1 5.4 L624.7 6.6 L626.3 6.8 L627.9 6.8 L629.6 8.3 L631.2 8.5 L632.8 8.5 L634.4 10.1 L636.0 9.4 L637.6 10.5 L639.2 10.8 L640.7 11.7 L642.3 11.6 L643.9 11.8 L645.5 11.1 L647.1 10.3 L648.6 10.0 L650.2 9.1 L651.8 8.8 L653.3 7.5 L654.9 6.9 L656.6 6.2 L658.2 6.6 L659.8 5.8 L661.5 5.3 L663.1 4.4 L664.8 3.6 L666.4 2.8 L668.0 4.4 L669.6 4.8 L671.1 5.1 L672.7 6.0 L674.3 6.7 L675.9 8.3 L677.5 9.3 L679.0 9.3 L680.6 9.4 L682.1 8.2 L683.7 8.1 L685.2 7.7 L686.8 6.8 L688.3 6.5 L689.9 5.8 L691.4 5.3 L692.9 5.8 L694.4 5.8 L696.0 5.2 L697.5 5.3 L699.0 5.1 L700.6 4.6 L702.2 5.7 L703.8 6.4 L705.4 7.2 L707.0 8.1 L708.6 8.4 L710.2 9.8 L712.1 9.8 L714.0 10.1 L715.8 10.0 L717.4 10.2 L719.0 10.3 L720.6 10.9 L722.1 10.7 L723.9 10.4 L725.6 9.9 L727.3 9.1 L729.0 8.3 L730.7 7.4 L732.4 5.5 L734.1 3.8 L735.8 2.1 L737.6 0.3 L739.3 2.4 L741.1 4.0 L742.9 6.9 L744.7 8.2 L746.4 10.9 L748.2 7.2 L750.0 5.1 L751.8 2.1 L754.0 4.2 L756.2 6.0 L757.7 6.5 L759.3 7.6 L760.8 8.3 L762.3 8.9 L763.8 9.3 L765.3 10.5 L766.8 11.8 L768.5 7.9 L770.3 5.7 L772.0 2.1 L772 40 Z" fill="#fff"/>
<g clip-path="url(#cb)"><path d="M0 -30 L0.0 0.4 L1.6 0.7 L3.3 1.0 L4.9 1.3 L6.6 2.4 L8.2 2.9 L9.8 4.0 L11.5 4.5 L13.0 4.2 L14.5 3.9 L16.1 4.6 L17.6 3.6 L19.1 3.8 L20.7 4.4 L22.2 4.6 L23.7 4.1 L25.3 4.7 L26.8 5.1 L29.0 7.0 L31.1 9.6 L32.8 8.1 L34.5 6.9 L36.2 6.4 L37.9 4.3 L39.6 3.7 L41.2 2.4 L42.9 0.7 L44.5 2.0 L46.1 4.7 L47.7 5.9 L49.3 7.5 L50.9 9.2 L52.5 11.8 L54.1 11.0 L55.7 10.5 L57.2 10.6 L58.8 10.0 L60.3 10.4 L61.9 10.0 L63.4 9.6 L65.3 8.7 L67.1 7.2 L69.0 4.8 L70.8 3.9 L72.8 2.5 L74.7 2.3 L76.7 1.0 L78.3 1.6 L80.0 2.8 L81.6 3.8 L83.2 6.0 L84.9 6.4 L86.5 7.9 L88.1 9.0 L89.7 9.3 L91.3 9.3 L92.9 9.6 L94.5 8.9 L96.1 9.8 L97.8 9.3 L99.4 9.7 L101.0 9.6 L102.6 9.6 L104.2 9.1 L105.7 8.1 L107.3 7.2 L108.9 6.8 L110.5 5.8 L112.0 4.3 L113.6 3.7 L115.2 3.1 L116.8 2.8 L118.4 1.9 L119.9 2.2 L121.5 2.3 L123.0 3.9 L124.6 4.1 L126.1 5.0 L127.7 5.9 L129.2 6.5 L130.8 7.0 L132.3 8.2 L133.9 8.3 L135.5 7.0 L137.1 6.3 L138.7 4.3 L140.4 3.2 L141.9 3.7 L143.5 2.5 L145.0 3.3 L146.6 2.9 L148.2 2.4 L149.7 2.0 L151.3 2.4 L152.8 2.4 L154.4 1.3 L156.0 1.5 L157.6 3.2 L159.3 4.7 L161.0 6.1 L162.6 7.5 L164.3 9.7 L165.9 10.6 L167.5 10.3 L169.1 11.1 L171.1 9.4 L173.1 7.0 L174.7 6.0 L176.2 4.4 L177.7 4.4 L179.3 3.8 L180.8 3.0 L182.4 3.9 L183.9 4.3 L185.5 6.5 L187.1 7.0 L188.6 8.7 L190.2 6.3 L191.7 3.2 L193.3 -0.3 L194.9 -0.1 L196.6 0.6 L198.2 -0.3 L199.8 0.2 L201.4 -0.0 L203.1 -0.3 L204.7 0.2 L206.3 -0.5 L208.0 0.6 L209.7 1.9 L211.3 2.5 L213.0 3.5 L214.7 5.1 L216.4 6.2 L218.1 7.4 L219.8 7.5 L221.8 8.7 L223.9 9.5 L225.4 10.1 L227.0 10.2 L228.5 10.9 L230.0 10.5 L231.6 10.3 L233.1 11.3 L234.7 10.9 L236.2 11.7 L237.8 11.8 L239.3 12.5 L240.8 11.1 L242.4 10.1 L243.9 8.6 L245.4 8.0 L246.9 6.6 L248.4 6.1 L249.9 4.8 L251.5 3.3 L253.0 2.4 L254.5 1.6 L256.1 3.4 L257.8 4.2 L259.4 6.3 L261.1 7.6 L262.7 8.4 L264.5 7.4 L266.3 5.1 L268.0 3.5 L269.6 5.1 L271.2 5.6 L272.8 7.4 L274.4 7.9 L276.0 8.7 L277.6 10.2 L279.2 10.3 L280.8 12.1 L282.4 12.2 L284.0 11.9 L285.7 12.4 L287.4 11.7 L288.9 11.2 L290.4 11.2 L292.0 12.4 L293.5 12.1 L295.0 12.5 L296.5 11.8 L298.0 12.5 L299.5 12.3 L301.0 12.3 L302.5 12.5 L304.0 12.5 L305.5 11.8 L307.0 11.5 L308.5 10.9 L310.0 11.4 L311.5 10.8 L313.0 10.6 L314.5 10.0 L316.1 10.4 L317.6 9.8 L319.1 9.7 L320.7 8.6 L322.2 7.7 L323.7 6.2 L325.3 4.7 L326.8 3.5 L328.3 2.6 L329.9 1.4 L331.4 1.3 L332.9 1.4 L334.5 2.4 L336.0 2.1 L337.8 4.4 L339.5 6.6 L341.3 8.0 L343.1 9.5 L344.9 11.3 L346.4 10.4 L348.0 10.0 L349.5 9.5 L351.0 9.3 L352.6 8.9 L354.1 9.0 L355.7 7.6 L357.2 7.3 L358.8 6.8 L360.3 4.4 L361.9 2.2 L363.4 -0.2 L365.1 0.2 L366.7 -0.2 L368.4 0.9 L370.1 0.3 L371.7 1.1 L373.4 0.9 L375.0 1.2 L376.6 1.2 L378.2 2.1 L379.8 1.4 L381.4 2.4 L382.9 2.3 L384.5 3.0 L386.1 3.4 L387.8 3.7 L389.5 4.7 L391.2 5.4 L392.9 6.6 L394.6 7.4 L396.2 8.7 L397.9 10.4 L399.6 10.6 L401.5 7.4 L403.5 4.5 L405.4 1.2 L407.0 2.2 L408.5 2.7 L410.1 2.5 L411.7 3.0 L413.3 4.0 L414.8 4.8 L416.4 4.8 L418.0 4.8 L419.5 5.8 L421.1 4.9 L422.7 5.3 L424.3 6.5 L425.8 6.4 L427.4 6.3 L429.0 7.2 L430.5 8.0 L432.1 7.3 L433.7 7.0 L435.3 6.6 L436.9 6.4 L438.5 7.3 L440.1 6.7 L441.7 7.1 L443.3 5.9 L445.1 7.0 L446.8 7.5 L448.6 8.8 L450.4 9.2 L452.1 10.2 L453.7 9.7 L455.3 8.8 L456.9 7.8 L458.5 7.0 L460.1 7.4 L461.7 5.7 L463.2 5.4 L464.8 4.5 L466.4 3.9 L468.0 2.6 L469.7 3.9 L471.3 4.7 L473.0 6.3 L474.7 7.8 L476.3 8.4 L478.0 9.8 L479.8 7.8 L481.6 6.3 L483.4 5.6 L485.3 4.3 L486.9 4.3 L488.6 4.0 L490.3 4.2 L491.9 4.2 L493.6 4.4 L495.1 4.3 L496.7 5.0 L498.2 6.1 L499.8 6.0 L501.3 6.5 L502.8 7.3 L504.4 7.7 L505.9 9.1 L507.6 7.7 L509.3 5.6 L510.9 3.9 L512.6 2.4 L514.3 1.1 L515.9 1.2 L517.6 2.0 L519.2 2.5 L520.8 2.5 L522.5 2.6 L524.1 3.7 L525.6 2.9 L527.1 3.0 L528.6 3.1 L530.1 3.1 L531.6 2.8 L533.2 4.3 L534.8 5.3 L536.3 7.0 L537.9 7.9 L539.5 9.4 L541.0 10.2 L542.6 11.5 L544.4 10.3 L546.1 9.2 L547.9 8.7 L549.6 7.5 L551.2 8.0 L552.7 8.0 L554.2 8.1 L555.8 7.8 L557.3 8.6 L558.8 8.3 L560.4 8.2 L561.9 8.3 L563.4 8.6 L565.1 8.6 L566.7 9.1 L568.3 8.6 L570.0 8.2 L571.6 9.0 L573.1 8.8 L574.7 8.2 L576.2 8.3 L577.8 8.5 L579.3 8.8 L580.9 9.5 L582.4 9.6 L584.0 9.3 L585.5 8.9 L587.1 9.2 L588.7 9.2 L590.4 9.2 L592.0 8.9 L593.6 9.7 L595.2 10.1 L596.8 10.0 L598.4 9.3 L600.0 9.9 L601.5 9.3 L603.1 9.7 L604.6 9.1 L606.2 9.5 L607.7 9.1 L609.3 8.1 L610.8 8.1 L612.4 8.6 L613.9 7.8 L615.5 7.6 L617.5 6.6 L619.5 6.0 L621.4 5.2 L623.1 5.4 L624.7 6.6 L626.3 6.8 L627.9 6.8 L629.6 8.3 L631.2 8.5 L632.8 8.5 L634.4 10.1 L636.0 9.4 L637.6 10.5 L639.2 10.8 L640.7 11.7 L642.3 11.6 L643.9 11.8 L645.5 11.1 L647.1 10.3 L648.6 10.0 L650.2 9.1 L651.8 8.8 L653.3 7.5 L654.9 6.9 L656.6 6.2 L658.2 6.6 L659.8 5.8 L661.5 5.3 L663.1 4.4 L664.8 3.6 L666.4 2.8 L668.0 4.4 L669.6 4.8 L671.1 5.1 L672.7 6.0 L674.3 6.7 L675.9 8.3 L677.5 9.3 L679.0 9.3 L680.6 9.4 L682.1 8.2 L683.7 8.1 L685.2 7.7 L686.8 6.8 L688.3 6.5 L689.9 5.8 L691.4 5.3 L692.9 5.8 L694.4 5.8 L696.0 5.2 L697.5 5.3 L699.0 5.1 L700.6 4.6 L702.2 5.7 L703.8 6.4 L705.4 7.2 L707.0 8.1 L708.6 8.4 L710.2 9.8 L712.1 9.8 L714.0 10.1 L715.8 10.0 L717.4 10.2 L719.0 10.3 L720.6 10.9 L722.1 10.7 L723.9 10.4 L725.6 9.9 L727.3 9.1 L729.0 8.3 L730.7 7.4 L732.4 5.5 L734.1 3.8 L735.8 2.1 L737.6 0.3 L739.3 2.4 L741.1 4.0 L742.9 6.9 L744.7 8.2 L746.4 10.9 L748.2 7.2 L750.0 5.1 L751.8 2.1 L754.0 4.2 L756.2 6.0 L757.7 6.5 L759.3 7.6 L760.8 8.3 L762.3 8.9 L763.8 9.3 L765.3 10.5 L766.8 11.8 L768.5 7.9 L770.3 5.7 L772.0 2.1 L772 -30 Z" transform="translate(2 3.5)" fill="#7a7a7a" filter="url(#bl)"/></g>
<path d="M0.0 0.4 L1.6 0.7 L3.3 1.0 L4.9 1.3 L6.6 2.4 L8.2 2.9 L9.8 4.0 L11.5 4.5 L13.0 4.2 L14.5 3.9 L16.1 4.6 L17.6 3.6 L19.1 3.8 L20.7 4.4 L22.2 4.6 L23.7 4.1 L25.3 4.7 L26.8 5.1 L29.0 7.0 L31.1 9.6 L32.8 8.1 L34.5 6.9 L36.2 6.4 L37.9 4.3 L39.6 3.7 L41.2 2.4 L42.9 0.7 L44.5 2.0 L46.1 4.7 L47.7 5.9 L49.3 7.5 L50.9 9.2 L52.5 11.8 L54.1 11.0 L55.7 10.5 L57.2 10.6 L58.8 10.0 L60.3 10.4 L61.9 10.0 L63.4 9.6 L65.3 8.7 L67.1 7.2 L69.0 4.8 L70.8 3.9 L72.8 2.5 L74.7 2.3 L76.7 1.0 L78.3 1.6 L80.0 2.8 L81.6 3.8 L83.2 6.0 L84.9 6.4 L86.5 7.9 L88.1 9.0 L89.7 9.3 L91.3 9.3 L92.9 9.6 L94.5 8.9 L96.1 9.8 L97.8 9.3 L99.4 9.7 L101.0 9.6 L102.6 9.6 L104.2 9.1 L105.7 8.1 L107.3 7.2 L108.9 6.8 L110.5 5.8 L112.0 4.3 L113.6 3.7 L115.2 3.1 L116.8 2.8 L118.4 1.9 L119.9 2.2 L121.5 2.3 L123.0 3.9 L124.6 4.1 L126.1 5.0 L127.7 5.9 L129.2 6.5 L130.8 7.0 L132.3 8.2 L133.9 8.3 L135.5 7.0 L137.1 6.3 L138.7 4.3 L140.4 3.2 L141.9 3.7 L143.5 2.5 L145.0 3.3 L146.6 2.9 L148.2 2.4 L149.7 2.0 L151.3 2.4 L152.8 2.4 L154.4 1.3 L156.0 1.5 L157.6 3.2 L159.3 4.7 L161.0 6.1 L162.6 7.5 L164.3 9.7 L165.9 10.6 L167.5 10.3 L169.1 11.1 L171.1 9.4 L173.1 7.0 L174.7 6.0 L176.2 4.4 L177.7 4.4 L179.3 3.8 L180.8 3.0 L182.4 3.9 L183.9 4.3 L185.5 6.5 L187.1 7.0 L188.6 8.7 L190.2 6.3 L191.7 3.2 L193.3 -0.3 L194.9 -0.1 L196.6 0.6 L198.2 -0.3 L199.8 0.2 L201.4 -0.0 L203.1 -0.3 L204.7 0.2 L206.3 -0.5 L208.0 0.6 L209.7 1.9 L211.3 2.5 L213.0 3.5 L214.7 5.1 L216.4 6.2 L218.1 7.4 L219.8 7.5 L221.8 8.7 L223.9 9.5 L225.4 10.1 L227.0 10.2 L228.5 10.9 L230.0 10.5 L231.6 10.3 L233.1 11.3 L234.7 10.9 L236.2 11.7 L237.8 11.8 L239.3 12.5 L240.8 11.1 L242.4 10.1 L243.9 8.6 L245.4 8.0 L246.9 6.6 L248.4 6.1 L249.9 4.8 L251.5 3.3 L253.0 2.4 L254.5 1.6 L256.1 3.4 L257.8 4.2 L259.4 6.3 L261.1 7.6 L262.7 8.4 L264.5 7.4 L266.3 5.1 L268.0 3.5 L269.6 5.1 L271.2 5.6 L272.8 7.4 L274.4 7.9 L276.0 8.7 L277.6 10.2 L279.2 10.3 L280.8 12.1 L282.4 12.2 L284.0 11.9 L285.7 12.4 L287.4 11.7 L288.9 11.2 L290.4 11.2 L292.0 12.4 L293.5 12.1 L295.0 12.5 L296.5 11.8 L298.0 12.5 L299.5 12.3 L301.0 12.3 L302.5 12.5 L304.0 12.5 L305.5 11.8 L307.0 11.5 L308.5 10.9 L310.0 11.4 L311.5 10.8 L313.0 10.6 L314.5 10.0 L316.1 10.4 L317.6 9.8 L319.1 9.7 L320.7 8.6 L322.2 7.7 L323.7 6.2 L325.3 4.7 L326.8 3.5 L328.3 2.6 L329.9 1.4 L331.4 1.3 L332.9 1.4 L334.5 2.4 L336.0 2.1 L337.8 4.4 L339.5 6.6 L341.3 8.0 L343.1 9.5 L344.9 11.3 L346.4 10.4 L348.0 10.0 L349.5 9.5 L351.0 9.3 L352.6 8.9 L354.1 9.0 L355.7 7.6 L357.2 7.3 L358.8 6.8 L360.3 4.4 L361.9 2.2 L363.4 -0.2 L365.1 0.2 L366.7 -0.2 L368.4 0.9 L370.1 0.3 L371.7 1.1 L373.4 0.9 L375.0 1.2 L376.6 1.2 L378.2 2.1 L379.8 1.4 L381.4 2.4 L382.9 2.3 L384.5 3.0 L386.1 3.4 L387.8 3.7 L389.5 4.7 L391.2 5.4 L392.9 6.6 L394.6 7.4 L396.2 8.7 L397.9 10.4 L399.6 10.6 L401.5 7.4 L403.5 4.5 L405.4 1.2 L407.0 2.2 L408.5 2.7 L410.1 2.5 L411.7 3.0 L413.3 4.0 L414.8 4.8 L416.4 4.8 L418.0 4.8 L419.5 5.8 L421.1 4.9 L422.7 5.3 L424.3 6.5 L425.8 6.4 L427.4 6.3 L429.0 7.2 L430.5 8.0 L432.1 7.3 L433.7 7.0 L435.3 6.6 L436.9 6.4 L438.5 7.3 L440.1 6.7 L441.7 7.1 L443.3 5.9 L445.1 7.0 L446.8 7.5 L448.6 8.8 L450.4 9.2 L452.1 10.2 L453.7 9.7 L455.3 8.8 L456.9 7.8 L458.5 7.0 L460.1 7.4 L461.7 5.7 L463.2 5.4 L464.8 4.5 L466.4 3.9 L468.0 2.6 L469.7 3.9 L471.3 4.7 L473.0 6.3 L474.7 7.8 L476.3 8.4 L478.0 9.8 L479.8 7.8 L481.6 6.3 L483.4 5.6 L485.3 4.3 L486.9 4.3 L488.6 4.0 L490.3 4.2 L491.9 4.2 L493.6 4.4 L495.1 4.3 L496.7 5.0 L498.2 6.1 L499.8 6.0 L501.3 6.5 L502.8 7.3 L504.4 7.7 L505.9 9.1 L507.6 7.7 L509.3 5.6 L510.9 3.9 L512.6 2.4 L514.3 1.1 L515.9 1.2 L517.6 2.0 L519.2 2.5 L520.8 2.5 L522.5 2.6 L524.1 3.7 L525.6 2.9 L527.1 3.0 L528.6 3.1 L530.1 3.1 L531.6 2.8 L533.2 4.3 L534.8 5.3 L536.3 7.0 L537.9 7.9 L539.5 9.4 L541.0 10.2 L542.6 11.5 L544.4 10.3 L546.1 9.2 L547.9 8.7 L549.6 7.5 L551.2 8.0 L552.7 8.0 L554.2 8.1 L555.8 7.8 L557.3 8.6 L558.8 8.3 L560.4 8.2 L561.9 8.3 L563.4 8.6 L565.1 8.6 L566.7 9.1 L568.3 8.6 L570.0 8.2 L571.6 9.0 L573.1 8.8 L574.7 8.2 L576.2 8.3 L577.8 8.5 L579.3 8.8 L580.9 9.5 L582.4 9.6 L584.0 9.3 L585.5 8.9 L587.1 9.2 L588.7 9.2 L590.4 9.2 L592.0 8.9 L593.6 9.7 L595.2 10.1 L596.8 10.0 L598.4 9.3 L600.0 9.9 L601.5 9.3 L603.1 9.7 L604.6 9.1 L606.2 9.5 L607.7 9.1 L609.3 8.1 L610.8 8.1 L612.4 8.6 L613.9 7.8 L615.5 7.6 L617.5 6.6 L619.5 6.0 L621.4 5.2 L623.1 5.4 L624.7 6.6 L626.3 6.8 L627.9 6.8 L629.6 8.3 L631.2 8.5 L632.8 8.5 L634.4 10.1 L636.0 9.4 L637.6 10.5 L639.2 10.8 L640.7 11.7 L642.3 11.6 L643.9 11.8 L645.5 11.1 L647.1 10.3 L648.6 10.0 L650.2 9.1 L651.8 8.8 L653.3 7.5 L654.9 6.9 L656.6 6.2 L658.2 6.6 L659.8 5.8 L661.5 5.3 L663.1 4.4 L664.8 3.6 L666.4 2.8 L668.0 4.4 L669.6 4.8 L671.1 5.1 L672.7 6.0 L674.3 6.7 L675.9 8.3 L677.5 9.3 L679.0 9.3 L680.6 9.4 L682.1 8.2 L683.7 8.1 L685.2 7.7 L686.8 6.8 L688.3 6.5 L689.9 5.8 L691.4 5.3 L692.9 5.8 L694.4 5.8 L696.0 5.2 L697.5 5.3 L699.0 5.1 L700.6 4.6 L702.2 5.7 L703.8 6.4 L705.4 7.2 L707.0 8.1 L708.6 8.4 L710.2 9.8 L712.1 9.8 L714.0 10.1 L715.8 10.0 L717.4 10.2 L719.0 10.3 L720.6 10.9 L722.1 10.7 L723.9 10.4 L725.6 9.9 L727.3 9.1 L729.0 8.3 L730.7 7.4 L732.4 5.5 L734.1 3.8 L735.8 2.1 L737.6 0.3 L739.3 2.4 L741.1 4.0 L742.9 6.9 L744.7 8.2 L746.4 10.9 L748.2 7.2 L750.0 5.1 L751.8 2.1 L754.0 4.2 L756.2 6.0 L757.7 6.5 L759.3 7.6 L760.8 8.3 L762.3 8.9 L763.8 9.3 L765.3 10.5 L766.8 11.8 L768.5 7.9 L770.3 5.7 L772.0 2.1" fill="none" stroke="#333" stroke-width="0.9" stroke-dasharray="1.2 0.9"/>
</svg>
<div class="b" style="left:1111px;top:856px;width:1px;height:8px;background:#fff;"></div>
<div class="b" style="left:1901px;top:331px;width:22px;height:112px;background:#2c54e8;border-radius:9px 0 0 9px;box-shadow:-1px 1px 3px rgba(0,0,0,0.25);"></div>
<svg class="b" style="left:1906px;top:379px;" width="10" height="14" viewBox="0 0 10 14"><path d="M7.5 2 L3 7 L7.5 12" fill="none" stroke="#fff" stroke-width="1.8"/></svg>
<div class="b" style="left:0px;top:0px;width:1921px;height:1px;background:#000;"></div>
<div class="b" style="left:0px;top:0px;width:1px;height:917px;background:#000;"></div>
<div class="b" style="left:1920px;top:0px;width:1px;height:917px;background:#000;"></div>
<div class="b" style="left:0px;top:916px;width:1921px;height:1px;background:#000;"></div>
</body></html>
